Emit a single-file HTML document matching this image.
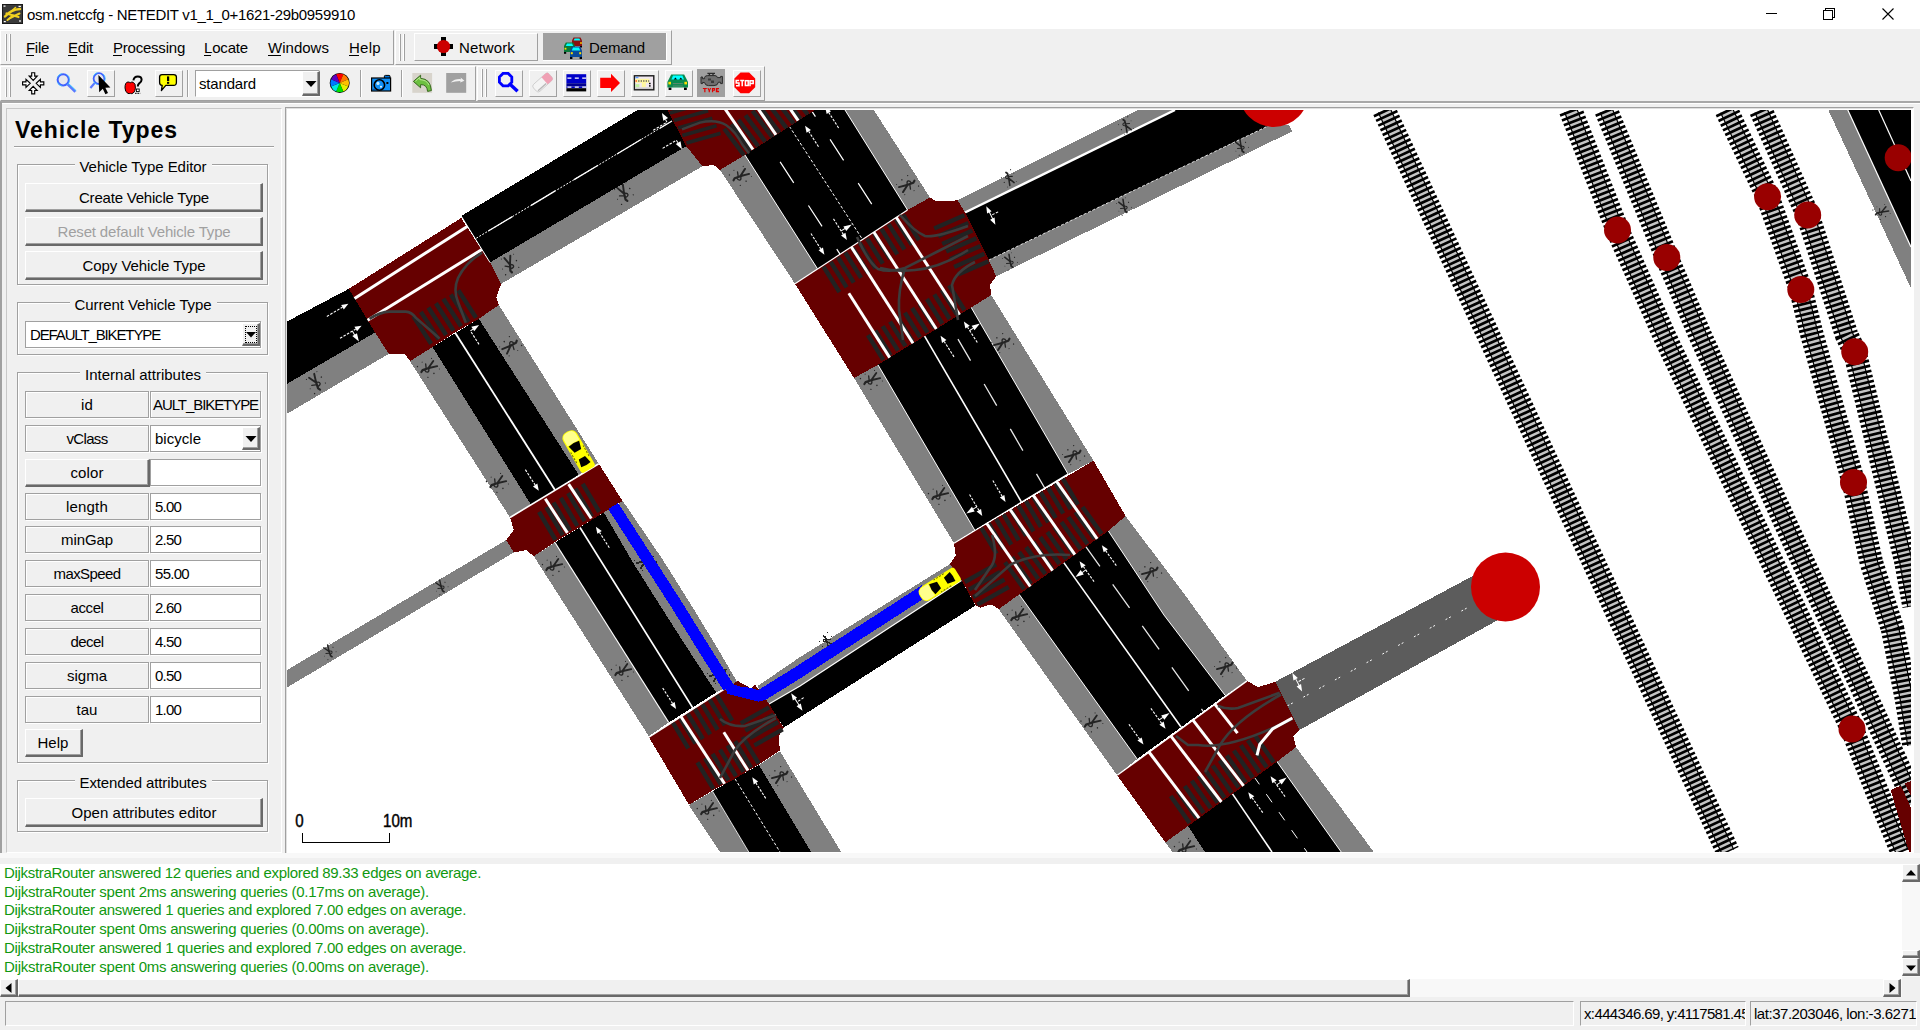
<!DOCTYPE html><html><head><meta charset="utf-8"><title>NETEDIT</title><style>
*{box-sizing:border-box;margin:0;padding:0}
html,body{width:1920px;height:1030px;overflow:hidden;background:#f0f0f0;font-family:"Liberation Sans",sans-serif;}
.a{position:absolute}
.t{position:absolute;white-space:pre;color:#000}
u{text-decoration:none;border-bottom:1px solid #000;}
.btn{position:absolute;background:#f0f0f0;border-top:1px solid #fff;border-left:1px solid #fff;border-right:2px solid #696969;border-bottom:2px solid #696969;box-shadow:inset -1px -1px 0 #a0a0a0}
.btn2{position:absolute;background:#f0f0f0;border-top:1px solid #fff;border-left:1px solid #fff;border-right:1px solid #a0a0a0;border-bottom:1px solid #a0a0a0;}
.lab{position:absolute;background:#f0f0f0;border:1px solid #a0a0a0;box-shadow:inset 1px 1px 0 #fff, 1px 1px 0 #fff}
.fld{position:absolute;background:#fff;border:1px solid #a0a0a0;box-shadow:1px 1px 0 #fff}
.grp{position:absolute;border:1px solid #a0a0a0;box-shadow:inset 1px 1px 0 #fff, 1px 1px 0 #fff}
.gl{position:absolute;background:#f0f0f0;height:16px}
.grip{position:absolute;width:2px;border-left:1px solid #fff;border-right:1px solid #a0a0a0}
.sep{position:absolute;width:2px;border-left:1px solid #a0a0a0;border-right:1px solid #fff}
.panel{position:absolute;border-right:1px solid #a0a0a0;border-bottom:1px solid #a0a0a0;border-top:1px solid #fff;border-left:1px solid #fff}
.sunk{position:absolute;border-top:1px solid #a0a0a0;border-left:1px solid #a0a0a0;border-bottom:1px solid #fff;border-right:1px solid #fff}
</style></head><body>
<div class="a" style="left:0;top:0;width:1920px;height:29px;background:#fff"></div>
<svg class="a" style="left:2px;top:4px" width="21" height="20" viewBox="0 0 21 20"><rect width="21" height="20" fill="#3a3a3a"/><rect x=".5" y=".5" width="20" height="19" fill="none" stroke="#1a1a1a"/>
<g fill="none" stroke="#f0d020" stroke-linecap="round"><path d="M3 12.5Q9 5.5 18 5" stroke-width="2.4"/><path d="M4.5 9.5L16.5 13" stroke-width="2.2"/><path d="M7.5 14.5Q12 12 17.5 9.5" stroke-width="2"/><path d="M5.5 16L11 11.5" stroke-width="2"/><path d="M9 7.5L13.5 3.5" stroke-width="1.6"/></g>
<g fill="#fff"><rect x="1.5" y="1.5" width="2" height="1.2"/><rect x="16.5" y="1.8" width="2.4" height="1.2"/><rect x="1.8" y="17" width="2" height="1.2"/><rect x="17" y="16.4" width="2" height="1.2"/></g></svg>

<span class="t " style="left:27.00px;top:6.20px;font-size:15px;line-height:17.25px;letter-spacing:-0.319px;">osm.netccfg - NETEDIT v1_1_0+1621-29b0959910</span>
<svg class="a" style="left:1750px;top:0" width="170" height="29" viewBox="0 0 170 29"><g stroke="#000" stroke-width="1" fill="none" shape-rendering="crispEdges"><path d="M15.5 13.5h11"/><path d="M73.5 10.5h9v9h-9z"/><path d="M75.5 10.5v-2h9v9h-2"/></g><path d="M132.5 8.5l11 11M143.5 8.5l-11 11" stroke="#000" stroke-width="1.1" fill="none"/></svg>
<div class="panel" style="left:0;top:30px;width:394px;height:35px"></div>
<div class="panel" style="left:395px;top:30px;width:277px;height:35px"></div>
<div class="grip" style="left:5px;top:34px;height:27px"></div><div class="grip" style="left:9px;top:34px;height:27px"></div>
<div class="grip" style="left:399px;top:34px;height:27px"></div><div class="grip" style="left:403px;top:34px;height:27px"></div>
<span class="t " style="left:26.00px;top:39.20px;font-size:15px;line-height:17.25px;letter-spacing:-0.292px;">File</span>
<div class="a" style="left:26px;top:55px;width:8.2px;height:1px;background:#000"></div>
<span class="t " style="left:68.00px;top:39.20px;font-size:15px;line-height:17.25px;letter-spacing:-0.212px;">Edit</span>
<div class="a" style="left:68px;top:55px;width:9.0px;height:1px;background:#000"></div>
<span class="t " style="left:113.00px;top:39.20px;font-size:15px;line-height:17.25px;letter-spacing:-0.220px;">Processing</span>
<div class="a" style="left:113px;top:55px;width:9.0px;height:1px;background:#000"></div>
<span class="t " style="left:204.00px;top:39.20px;font-size:15px;line-height:17.25px;letter-spacing:-0.173px;">Locate</span>
<div class="a" style="left:204px;top:55px;width:7.3px;height:1px;background:#000"></div>
<span class="t " style="left:268.00px;top:39.20px;font-size:15px;line-height:17.25px;letter-spacing:0.021px;">Windows</span>
<div class="a" style="left:268px;top:55px;width:13.2px;height:1px;background:#000"></div>
<span class="t " style="left:349.00px;top:39.20px;font-size:15px;line-height:17.25px;letter-spacing:0.288px;">Help</span>
<div class="a" style="left:349px;top:55px;width:9.8px;height:1px;background:#000"></div>
<div class="btn2" style="left:414px;top:33px;width:124px;height:28px"></div>
<div class="a" style="left:543px;top:33px;width:124px;height:28px;background:#a0a0a0;border-right:1px solid #fff;border-bottom:1px solid #fff"></div>
<span class="t " style="left:459.00px;top:39.20px;font-size:15px;line-height:17.25px;letter-spacing:0.141px;">Network</span>
<span class="t " style="left:589.00px;top:39.20px;font-size:15px;line-height:17.25px;letter-spacing:-0.116px;">Demand</span>
<div class="panel" style="left:0;top:66px;width:476px;height:35px"></div>
<div class="panel" style="left:477px;top:66px;width:288px;height:35px"></div>
<div class="grip" style="left:5px;top:69px;height:28px"></div><div class="grip" style="left:9px;top:69px;height:28px"></div>
<div class="grip" style="left:481px;top:69px;height:28px"></div><div class="grip" style="left:485px;top:69px;height:28px"></div>
<div class="btn2" style="left:87px;top:70px;width:28px;height:27px"></div>
<div class="btn2" style="left:155px;top:70px;width:28px;height:27px"></div>
<div class="btn2" style="left:495px;top:70px;width:28px;height:27px"></div>
<div class="btn2" style="left:529px;top:70px;width:28px;height:27px"></div>
<div class="btn2" style="left:563px;top:70px;width:28px;height:27px"></div>
<div class="btn2" style="left:597px;top:70px;width:28px;height:27px"></div>
<div class="btn2" style="left:631px;top:70px;width:28px;height:27px"></div>
<div class="btn2" style="left:665px;top:70px;width:28px;height:27px"></div>
<div class="btn2" style="left:733px;top:70px;width:28px;height:27px"></div>
<div class="a" style="left:697px;top:69px;width:28px;height:28px;background:#a0a0a0"></div>
<div class="sep" style="left:187px;top:70px;height:27px"></div>
<div class="sep" style="left:360px;top:70px;height:27px"></div>
<div class="sep" style="left:401px;top:70px;height:27px"></div>
<div class="a" style="left:195px;top:70px;width:125px;height:27px;background:#fff;border-top:1px solid #a0a0a0;border-left:1px solid #a0a0a0;border-bottom:1px solid #fff;border-right:1px solid #fff"></div>
<div class="btn" style="left:302px;top:71px;width:18px;height:25px"></div>
<svg class="a" style="left:305px;top:80px" width="12" height="8"><path d="M0.5 1h11L6 7z" fill="#000"/></svg>
<span class="t " style="left:199.00px;top:75.20px;font-size:15px;line-height:17.25px;letter-spacing:-0.172px;">standard</span>
<svg class="a" style="left:0;top:0" width="800" height="101" viewBox="0 0 800 101">
<!-- network icon -->
<g transform="translate(443.5 46.5)"><rect x="-2.5" y="-9.5" width="5" height="19" fill="#000"/><rect x="-9.5" y="-2.5" width="19" height="5" fill="#000"/><circle r="6.6" fill="#cc0000"/></g>
<!-- demand icon: three cars -->
<g transform="translate(563 37)">
 <g transform="translate(7 0)"><path d="M2 3.5L3.5 0.5H10.5L12 3.5V9H2Z" fill="#8b1010"/><path d="M3.6 3.6L4.6 1.4H9.4L10.4 3.6Z" fill="#00ffff"/><rect x="2" y="9" width="2" height="1.5" fill="#000"/><rect x="10" y="9" width="2" height="1.5" fill="#000"/><rect x="10.2" y="5.2" width="1.6" height="1.6" fill="#ffe000"/></g>
 <g transform="translate(0 5)"><path d="M1 4L2.8 0.5H10.2L12 4V10H1Z" fill="#0a7a3a"/><path d="M2.8 4L4 1.5H9L10.2 4Z" fill="#00ffff"/><rect x="1" y="10" width="2.2" height="1.8" fill="#000"/><rect x="1.6" y="5.8" width="1.8" height="1.8" fill="#ffe000"/></g>
 <g transform="translate(6 9)"><path d="M1 4.5L2.8 0.5H11.2L13 4.5V11H1Z" fill="#0a4a9a"/><path d="M2.8 4.4L4 1.5H10L11.2 4.4Z" fill="#00ffff"/><rect x="1" y="11" width="2.4" height="2" fill="#000"/><rect x="10.6" y="11" width="2.4" height="2" fill="#000"/><rect x="1.8" y="6.2" width="2" height="2" fill="#ffe000"/><rect x="10.2" y="6.2" width="2" height="2" fill="#ffe000"/></g>
</g>
<!-- recenter -->
<g transform="translate(33.2 83.3)" fill="#fff" stroke="#000" stroke-width="1.15" stroke-linejoin="miter">
 <path d="M-1.5 -10.6H1.5V-7.2H4L0 -3L-4 -7.2H-1.5Z" transform="rotate(0)"/><path d="M-1.5 -10.6H1.5V-7.2H4L0 -3L-4 -7.2H-1.5Z" transform="rotate(90)"/><path d="M-1.5 -10.6H1.5V-7.2H4L0 -3L-4 -7.2H-1.5Z" transform="rotate(180)"/><path d="M-1.5 -10.6H1.5V-7.2H4L0 -3L-4 -7.2H-1.5Z" transform="rotate(270)"/>
</g>
<!-- magnifier -->
<g transform="translate(63.2 79.8)"><path d="M4 4L12.2 12" stroke="#5a78ff" stroke-width="2.6"/><path d="M5.2 3.6L13 11" stroke="#40c8ff" stroke-width="1"/><circle r="5.6" fill="#e8e8ee" stroke="#4060ff" stroke-width="2"/><circle r="6.4" fill="none" stroke="#40c8ff" stroke-width=".8" stroke-dasharray="6 5"/></g>
<!-- magnifier + cursor -->
<g transform="translate(99 78.6)"><path d="M-4 4L-8.6 9.4" stroke="#5a78ff" stroke-width="2.2"/><circle r="5.4" fill="#e8e8ee" stroke="#4060ff" stroke-width="1.8"/><circle r="6.2" fill="none" stroke="#40c8ff" stroke-width=".8" stroke-dasharray="5 6"/><path d="M-0.6 -3.6L0.2 13.6L3.8 10.2L6.4 15.6L9 14.4L6.4 9.2L11.4 8.8Z" fill="#000"/></g>
<!-- apple + ? -->
<g transform="translate(130.4 87.6)"><path d="M-5.4 0.2Q-5.4 -5.4 -2.4 -5.6Q-1 -5.6 -0.2 -4.8Q0.8 -5.8 2.6 -5.4Q5.4 -4.4 5 0.6Q4.4 5.4 1.4 6Q0.4 6.2 -0.2 5.6Q-1.2 6.4 -2.4 5.8Q-5.4 4.4 -5.4 0.2Z" fill="#ff0000" stroke="#000" stroke-width="1"/></g>
<g transform="translate(137.6 84)"><path d="M-4.2 -3.6Q-3.6 -7.6 0.2 -7.6Q4 -7.6 4 -4.2Q4 -2.2 1.6 -0.6Q0.2 0.4 0.2 2.6" fill="none" stroke="#000" stroke-width="2"/><rect x="-1.2" y="5" width="2.8" height="2.6" fill="#fff" stroke="#000" stroke-width=".9"/><path d="M-2.4 9.4H2.6" stroke="#000" stroke-width="1.1" stroke-dasharray="1.3 1"/></g>
<!-- speech bubble -->
<g transform="translate(168 83)"><path d="M-8.4 -6Q-8.4 -8.4 -6 -8.4H5.6Q8.4 -8.4 8.4 -6V-0.4Q8.4 2.4 5.6 2.4H-2.2L-6.6 7.6L-5.8 2.4H-6Q-8.4 2.4 -8.4 -0.4Z" fill="#ffff00" stroke="#000" stroke-width="1.3" stroke-linejoin="round"/><rect x="-1" y="-6.6" width="2.2" height="4.8" fill="#000"/><rect x="-1" y="-1" width="2.2" height="1.8" fill="#000"/></g>
<!-- color wheel -->
<g transform="translate(339.7 82.9)"><circle r="10" fill="#000"/>
<path d="M0 0L-3.6 -8.6A9.3 9.3 0 0 1 3.6 -8.6Z" fill="#ff0000"/>
<path d="M0 0L3.6 -8.6A9.3 9.3 0 0 1 8.6 -3.6Z" fill="#ff7800"/>
<path d="M0 0L8.6 -3.6A9.3 9.3 0 0 1 8.6 3.6Z" fill="#ffc000"/>
<path d="M0 0L8.6 3.6A9.3 9.3 0 0 1 3.6 8.6Z" fill="#e8f000"/>
<path d="M0 0L3.6 8.6A9.3 9.3 0 0 1 -3.6 8.6Z" fill="#00e000"/>
<path d="M0 0L-3.6 8.6A9.3 9.3 0 0 1 -8.6 3.6Z" fill="#00e8e0"/>
<path d="M0 0L-8.6 3.6A9.3 9.3 0 0 1 -8.6 -3.6Z" fill="#0078ff"/>
<path d="M0 0L-8.6 -3.6A9.3 9.3 0 0 1 -3.6 -8.6Z" fill="#6000c0"/>
</g>
<!-- camera -->
<g transform="translate(371 75)"><path d="M13.4 3V1.2Q13.4 0.4 14.4 0.4H18Q19 0.4 19 1.2V3" fill="#0078e0" stroke="#000" stroke-width="1"/><rect x="0.6" y="3" width="19" height="13" fill="#1090f8" stroke="#000" stroke-width="1.2"/><circle cx="8.4" cy="10" r="5.2" fill="#1090f8" stroke="#000" stroke-width="1.6"/><circle cx="7" cy="8.4" r="1.6" fill="#c0e8ff"/><circle cx="10" cy="11.8" r="1" fill="#e0f4ff"/><rect x="15.4" y="7" width="2" height="2" fill="#000"/><path d="M1.2 14.4H4" stroke="#0050a0" stroke-width="1"/></g>
<!-- undo -->
<rect x="412.3" y="73" width="19.8" height="19.8" fill="#d8d4cc"/>
<path d="M413.4 81.4L420.6 75.2V78.4Q430.6 78.8 431.4 90.6L427.6 91.4Q427 84.4 420.6 84.6V87.8Z" fill="#6cc040" stroke="#386820" stroke-width="1" stroke-linejoin="round"/>
<path d="M415.4 81.2L419.8 77.4V79.6Q427 80 429 85" fill="none" stroke="#b8e890" stroke-width="1"/>
<!-- redo -->
<rect x="446.2" y="73" width="20" height="19.8" fill="#a0a0a0"/>
<path d="M450.6 82.6Q455 78.6 461 79.2L460.6 77.6L464.4 80.8L460.2 82.4L460.4 81Q455.4 81 450.6 82.6Z" fill="#f0f0f0"/>
<!-- inspect -->
<g transform="translate(505.6 79.6)"><path d="M3.6 3.8L12 11.6" stroke="#0000ff" stroke-width="3.4"/><path d="M-2.6 -6.2H2.6L6.2 -2.6V2.6L2.6 6.2H-2.6L-6.2 2.6V-2.6Z" fill="#f0f0f0" stroke="#0000ff" stroke-width="2.8"/></g>
<!-- eraser -->
<g transform="translate(542.6 82.4) rotate(-42)"><rect x="-10.5" y="-4.6" width="21" height="9.4" rx="2.6" fill="#f4f4f4" stroke="#c8c8c8" stroke-width=".8"/><path d="M2.6 -4.6H7.9Q10.5 -4.6 10.5 -2V2.2Q10.5 4.8 7.9 4.8H2.6Z" fill="#f0a0b4"/><path d="M-9 3.2H2" stroke="#b8b8b8" stroke-width="1.4"/></g>
<!-- road (select) -->
<g transform="translate(566.4 74.2)"><rect width="19.8" height="9" fill="#0000c8"/><rect y="9" width="19.8" height="3.4" fill="#000090"/><rect y="12.4" width="19.8" height="1.6" fill="#0000c8"/><rect y="14" width="19.8" height="3.2" fill="#000"/><path d="M1 4H19.8M1 12.9H19.8" stroke="#fff" stroke-width="1.3" stroke-dasharray="4 3.4"/></g>
<!-- move arrow -->
<path d="M600.2 77.8H611V73.8L620 82.9L611 92V88H600.2Z" fill="#ff0000"/>
<!-- calendar / route -->
<g transform="translate(633.8 75.2)"><rect x=".6" y=".6" width="19.4" height="14" fill="#f0e8f0" stroke="#1a1a1a" stroke-width="1.4"/><rect x="1.6" y="1.6" width="3" height="1.4" fill="#60a0ff"/><rect x="1.6" y="3.6" width="14" height="4" fill="#fff8a0"/><rect x="8" y="7" width="4" height="5" fill="#fff8a0"/><rect x="1.6" y="9" width="4" height="3" fill="#c0f0a0"/><rect x="1.6" y="5" width="1.6" height="1.6" fill="#ff6030"/><path d="M4.4 5.8H15.4" stroke="#555" stroke-width="1.6" stroke-dasharray="1.2 1.3"/><rect x="15.2" y="7.6" width="1.6" height="1.4" fill="#000"/><rect x="15.2" y="10" width="1.6" height="1.4" fill="#000"/><path d="M1.6 13H19" stroke="#c8c8c8" stroke-width="1.4"/></g>
<!-- green car -->
<g transform="translate(666.8 74)"><path d="M0.6 8L4.4 0.6H17.4L21.2 8V13.6H0.6Z" fill="#0a8a50"/><path d="M4.6 5.6L6.2 1.6H15.6L17.2 5.6Z" fill="#00ffff"/><path d="M7 5.6L8.6 3.4L10.2 5.6ZM12.4 5.6L14 3.4L15.6 5.6Z" fill="#000"/><rect x="1.6" y="7.8" width="2.6" height="2.6" fill="#ffe000"/><rect x="17.6" y="7.8" width="2.6" height="2.6" fill="#ffe000"/><path d="M6 9.6H16M6 12H16" stroke="#608870" stroke-width="1"/><rect x="1.8" y="13.6" width="2.8" height="2.4" fill="#000"/><rect x="17.2" y="13.6" width="2.8" height="2.4" fill="#000"/></g>
<!-- engine TYPE -->
<g transform="translate(700 72)"><path d="M7.4 1.4H15M9.4 1.4V3.6M13 1.4V3.6" stroke="#2a2a2a" stroke-width="1.4" fill="none"/><path d="M4.6 5.4Q5 3.6 7.6 3.6H15Q17 3.6 17.4 5.6H20.6V4.4H22.4V11.6H20.6V10.2H18.4Q17.8 13.6 14 13.6H8.4Q5.2 13.6 4.6 10.6L2.6 10.4V11.6H1V5H2.6V6.8L4.6 6.6Z" fill="#6e6e6e" stroke="#2a2a2a" stroke-width="1"/><path d="M8 6.4H11V8.6H14V11H11V8.6H8Z" fill="#3a3a3a"/><g fill="#e00000" transform="translate(-0.46 -0.3) scale(.885 1)"><path d="M3.8 16.2H8.2V17.4H6.7V20.6H5.3V17.4H3.8Z"/><path d="M8.8 16.2H10.2L11 18L11.8 16.2H13.2L11.7 19V20.6H10.3V19Z"/><path d="M14 16.2H17.4V19H15.4V20.6H14ZM15.4 17.2V18H16.2V17.2Z"/><path d="M18.4 16.2H22V17.4H19.8V17.9H21.4V18.9H19.8V19.4H22V20.6H18.4Z"/></g></g>
<!-- stop -->
<g transform="translate(744.8 82.9)"><path d="M-4.3 -10.4H4.3L10.4 -4.3V4.3L4.3 10.4H-4.3L-10.4 4.3V-4.3Z" fill="#ff0000"/><g fill="none" stroke="#fff" stroke-width="1.5"><path d="M-5.6 -2.4H-8.6V0H-5.8V2.8H-8.8"/><path d="M-4.6 -2.4H-0.6M-2.6 -2.4V3.4"/><rect x="0.6" y="-2.2" width="2.8" height="4.8"/><path d="M5.2 3.4V-2.2H8.4V0.6H5.2"/></g></g>
</svg>

<div class="a" style="left:0;top:101px;width:1920px;height:2px;background:#a8a8a8"></div>
<div class="a" style="left:0;top:103px;width:1920px;height:1px;background:#fff"></div>
<div class="a" style="left:0;top:102px;width:2px;height:752px;background:#a0a0a0"></div>
<div class="sunk" style="left:6px;top:108px;width:276px;height:745px;border-color:#c8c8c8 #fff #fff #c8c8c8"></div>
<span class="t " style="left:15.00px;top:117.34px;font-size:23px;line-height:26.45px;letter-spacing:0.967px;font-weight:700;">Vehicle Types</span>
<div class="a" style="left:14px;top:146px;width:260px;height:1px;background:#a0a0a0"></div><div class="a" style="left:14px;top:147px;width:260px;height:1px;background:#fff"></div>
<div class="grp" style="left:17px;top:164px;width:251px;height:121px"></div>
<div class="gl" style="left:74.5px;top:157px;width:137.0px"></div>
<span class="t " style="left:79.50px;top:157.80px;font-size:15px;line-height:17.25px;letter-spacing:-0.060px;">Vehicle Type Editor</span>
<div class="btn" style="left:25px;top:183px;width:238px;height:29px"></div>
<span class="t " style="left:79.00px;top:189.20px;font-size:15px;line-height:17.25px;letter-spacing:-0.209px;">Create Vehicle Type</span>
<div class="btn" style="left:25px;top:217px;width:238px;height:29px"></div>
<span class="t " style="left:57.50px;top:223.20px;font-size:15px;line-height:17.25px;letter-spacing:-0.167px;color:#a0a0a0;">Reset default Vehicle Type</span>
<div class="btn" style="left:25px;top:251px;width:238px;height:29px"></div>
<span class="t " style="left:82.50px;top:257.20px;font-size:15px;line-height:17.25px;letter-spacing:-0.057px;">Copy Vehicle Type</span>
<div class="grp" style="left:17px;top:302px;width:251px;height:53px"></div>
<div class="gl" style="left:69.5px;top:295px;width:147.0px"></div>
<span class="t " style="left:74.50px;top:295.80px;font-size:15px;line-height:17.25px;letter-spacing:-0.098px;">Current Vehicle Type</span>
<div class="fld" style="left:25px;top:321px;width:236px;height:27px"></div>
<div class="btn" style="left:242px;top:323px;width:18px;height:23px"></div>
<div class="a" style="left:245px;top:326px;width:12px;height:17px;border:1px dotted #000"></div>
<svg class="a" style="left:246px;top:331px" width="10" height="7"><path d="M0 1h10L5 6.5z" fill="#000"/></svg>
<span class="t " style="left:30.00px;top:326.20px;font-size:15px;line-height:17.25px;letter-spacing:-1.131px;">DEFAULT_BIKETYPE</span>
<div class="grp" style="left:17px;top:372px;width:251px;height:391px"></div>
<div class="gl" style="left:80.0px;top:365px;width:126.0px"></div>
<span class="t " style="left:85.00px;top:365.80px;font-size:15px;line-height:17.25px;letter-spacing:0.005px;">Internal attributes</span>
<div class="lab" style="left:25px;top:391px;width:124px;height:27px"></div>
<span class="t " style="left:81.00px;top:396.20px;font-size:15px;line-height:17.25px;letter-spacing:0.163px;">id</span>
<div class="lab" style="left:150px;top:391px;width:111px;height:27px"></div>
<span class="t " style="left:153.00px;top:396.20px;font-size:15px;line-height:17.25px;letter-spacing:-1.072px;">AULT_BIKETYPE</span>
<div class="lab" style="left:25px;top:425px;width:124px;height:27px"></div>
<span class="t " style="left:66.50px;top:430.20px;font-size:15px;line-height:17.25px;letter-spacing:-0.668px;">vClass</span>
<div class="fld" style="left:150px;top:425px;width:111px;height:27px"></div>
<span class="t " style="left:155.00px;top:430.20px;font-size:15px;line-height:17.25px;letter-spacing:0.021px;">bicycle</span>
<div class="btn" style="left:242px;top:427px;width:18px;height:23px"></div>
<svg class="a" style="left:245px;top:435px" width="12" height="8"><path d="M0.5 1h11L6 7z" fill="#000"/></svg>
<div class="btn" style="left:25px;top:459px;width:125px;height:28px"></div>
<span class="t " style="left:70.50px;top:464.20px;font-size:15px;line-height:17.25px;letter-spacing:0.098px;">color</span>
<div class="fld" style="left:150px;top:459px;width:111px;height:27px"></div>
<div class="lab" style="left:25px;top:493px;width:124px;height:27px"></div>
<span class="t " style="left:66.00px;top:498.20px;font-size:15px;line-height:17.25px;letter-spacing:0.188px;">length</span>
<div class="fld" style="left:150px;top:493px;width:111px;height:27px"></div>
<span class="t " style="left:155.00px;top:498.20px;font-size:15px;line-height:17.25px;letter-spacing:-0.799px;">5.00</span>
<div class="lab" style="left:25px;top:526px;width:124px;height:27px"></div>
<span class="t " style="left:61.00px;top:531.20px;font-size:15px;line-height:17.25px;letter-spacing:-0.087px;">minGap</span>
<div class="fld" style="left:150px;top:526px;width:111px;height:27px"></div>
<span class="t " style="left:155.00px;top:531.20px;font-size:15px;line-height:17.25px;letter-spacing:-0.799px;">2.50</span>
<div class="lab" style="left:25px;top:560px;width:124px;height:27px"></div>
<span class="t " style="left:53.50px;top:565.20px;font-size:15px;line-height:17.25px;letter-spacing:-0.589px;">maxSpeed</span>
<div class="fld" style="left:150px;top:560px;width:111px;height:27px"></div>
<span class="t " style="left:155.00px;top:565.20px;font-size:15px;line-height:17.25px;letter-spacing:-0.707px;">55.00</span>
<div class="lab" style="left:25px;top:594px;width:124px;height:27px"></div>
<span class="t " style="left:70.50px;top:599.20px;font-size:15px;line-height:17.25px;letter-spacing:-0.403px;">accel</span>
<div class="fld" style="left:150px;top:594px;width:111px;height:27px"></div>
<span class="t " style="left:155.00px;top:599.20px;font-size:15px;line-height:17.25px;letter-spacing:-0.799px;">2.60</span>
<div class="lab" style="left:25px;top:628px;width:124px;height:27px"></div>
<span class="t " style="left:70.50px;top:633.20px;font-size:15px;line-height:17.25px;letter-spacing:-0.572px;">decel</span>
<div class="fld" style="left:150px;top:628px;width:111px;height:27px"></div>
<span class="t " style="left:155.00px;top:633.20px;font-size:15px;line-height:17.25px;letter-spacing:-0.799px;">4.50</span>
<div class="lab" style="left:25px;top:662px;width:124px;height:27px"></div>
<span class="t " style="left:67.00px;top:667.20px;font-size:15px;line-height:17.25px;letter-spacing:-0.002px;">sigma</span>
<div class="fld" style="left:150px;top:662px;width:111px;height:27px"></div>
<span class="t " style="left:155.00px;top:667.20px;font-size:15px;line-height:17.25px;letter-spacing:-0.799px;">0.50</span>
<div class="lab" style="left:25px;top:696px;width:124px;height:27px"></div>
<span class="t " style="left:76.50px;top:701.20px;font-size:15px;line-height:17.25px;letter-spacing:0.049px;">tau</span>
<div class="fld" style="left:150px;top:696px;width:111px;height:27px"></div>
<span class="t " style="left:155.00px;top:701.20px;font-size:15px;line-height:17.25px;letter-spacing:-0.799px;">1.00</span>
<div class="btn" style="left:25px;top:729px;width:58px;height:28px"></div>
<span class="t " style="left:37.50px;top:734.20px;font-size:15px;line-height:17.25px;letter-spacing:0.038px;">Help</span>
<div class="grp" style="left:17px;top:780px;width:251px;height:52px"></div>
<div class="gl" style="left:74.5px;top:773px;width:137.0px"></div>
<span class="t " style="left:79.50px;top:773.80px;font-size:15px;line-height:17.25px;letter-spacing:-0.118px;">Extended attributes</span>
<div class="btn" style="left:25px;top:798px;width:238px;height:29px"></div>
<span class="t " style="left:71.50px;top:804.20px;font-size:15px;line-height:17.25px;letter-spacing:0.034px;">Open attributes editor</span>
<div class="a" style="left:285px;top:107px;width:1629px;height:747px;border-top:1px solid #a0a0a0;border-left:1px solid #a0a0a0;border-right:1px solid #fff;border-bottom:1px solid #fff"></div><div class="a" style="left:286px;top:108px;width:1627px;height:745px;border-top:1px solid #e0e0e0;border-left:1px solid #e0e0e0;background:#fff"></div><svg class="a" style="left:287px;top:110px" width="1624" height="742" viewBox="287 110 1624 742">
<g shape-rendering="crispEdges">
<polygon points="287.0,670.0 506.2,540.0 513.8,552.5 287.0,687.5" fill="#808080" />
<polygon points="287.0,321.5 348.8,288.8 375.0,332.5 287.0,383.8" fill="#000" />
<polygon points="287.0,383.8 375.0,332.5 388.8,353.8 287.0,413.8" fill="#808080" />
<polygon points="461.2,216.0 637.5,110.0 667.5,110.0 686.2,146.2 490.0,262.5" fill="#000" />
<polygon points="490.0,262.5 686.2,146.2 702.5,166.2 501.2,283.8" fill="#808080" />
<polygon points="410.0,361.2 432.5,347.0 531.2,505.0 510.0,517.5" fill="#808080" />
<polygon points="432.5,347.0 478.8,318.8 578.8,475.0 531.2,505.0" fill="#000" />
<polygon points="478.8,318.8 498.8,305.0 598.8,463.8 578.8,475.0" fill="#808080" />
<polygon points="533.8,556.2 555.0,542.5 668.8,722.5 648.8,736.2" fill="#808080" />
<polygon points="555.0,542.5 603.8,512.5 632.8,562.2 658.9,603.7 682.9,641.3 716.2,692.5 668.8,722.5" fill="#000" />
<polygon points="603.8,512.5 622.8,501.0 662.3,559.0 690.4,603.7 717.0,647.4 737.5,682.5 716.2,692.5 682.9,641.3 658.9,603.7 632.8,562.2" fill="#808080" />
<polygon points="688.8,805.0 712.5,791.2 748.8,852.0 720.0,852.0" fill="#808080" />
<polygon points="712.5,791.2 758.8,765.0 811.2,852.0 748.8,852.0" fill="#000" />
<polygon points="758.8,765.0 780.0,751.2 841.2,852.0 811.2,852.0" fill="#808080" />
<polygon points="757.5,686.2 800.0,657.1 950.0,564.0 961.5,580.4 800.0,685.9 769.0,704.0" fill="#808080" />
<polygon points="769.0,704.0 800.0,685.9 961.5,580.4 975.5,605.5 783.8,727.5" fill="#000" />
<polygon points="720.0,170.0 745.0,155.0 817.5,268.8 795.0,283.8" fill="#808080" />
<polygon points="745.0,155.0 790.0,126.2 815.0,110.0 845.0,110.0 907.5,210.0 817.5,268.8" fill="#000" />
<polygon points="845.0,110.0 873.8,110.0 930.0,197.5 907.5,210.0" fill="#808080" />
<polygon points="854.0,378.0 878.0,364.8 974.7,530.0 954.0,543.2" fill="#808080" />
<polygon points="878.0,364.8 971.2,307.5 1068.0,474.0 974.7,530.0" fill="#000" />
<polygon points="971.2,307.5 991.2,295.0 1093.5,460.7 1068.0,474.0" fill="#808080" />
<polygon points="998.6,609.2 1019.2,594.4 1137.2,759.0 1117.2,775.3" fill="#808080" />
<polygon points="1019.2,594.4 1108.3,530.9 1164.0,615.1 1225.2,695.4 1137.2,759.0" fill="#000" />
<polygon points="1108.3,530.9 1125.6,516.0 1187.1,597.9 1247.0,680.9 1225.2,695.4 1164.0,615.1" fill="#808080" />
<polygon points="1165.3,842.4 1188.0,826.1 1205.0,852.0 1172.5,852.0" fill="#808080" />
<polygon points="1188.0,826.1 1277.0,761.7 1341.2,852.0 1205.0,852.0" fill="#000" />
<polygon points="1277.0,761.7 1296.0,747.1 1373.8,852.0 1341.2,852.0" fill="#808080" />
<polygon points="957.5,200.0 1137.5,110.0 1175.0,110.0 965.0,212.5" fill="#808080" />
<polygon points="965.0,212.5 1175.0,110.0 1290.0,110.0 1290.0,116.0 988.8,260.0" fill="#000" />
<polygon points="988.8,260.0 1270.0,125.0 1288.8,125.0 1292.5,131.2 996.2,276.2" fill="#808080" />
<polygon points="1275.2,681.8 1493.0,565.1 1518.0,608.9 1299.7,729.9" fill="#5c5c5c" />
<polygon points="1828.3,110.0 1847.8,110.0 1911.0,247.0 1911.0,288.3" fill="#808080" />
<polygon points="1847.8,110.0 1911.0,110.0 1911.0,247.0" fill="#000" />
</g>
<polyline points="476.3,238.2 672.0,121.0" fill="none" stroke="#fff" stroke-width="1" stroke-dasharray="2 1.5"/>
<polyline points="476.3,238.2 672.0,121.0" fill="none" stroke="#fff" stroke-width="1.3" stroke-dasharray="28 22" stroke-dashoffset="-14"/>
<polyline points="455.0,332.5 555.0,490.0" fill="none" stroke="#fff" stroke-width="1.8" />
<polyline points="580.0,527.5 692.5,707.5" fill="none" stroke="#fff" stroke-width="1.6" />
<polyline points="555.0,542.5 668.8,722.5" fill="none" stroke="#fff" stroke-width="1.2" />
<polyline points="735.0,778.8 780.0,852.0" fill="none" stroke="#fff" stroke-width="1" stroke-dasharray="3 2"/>
<polyline points="712.5,791.2 748.8,852.0" fill="none" stroke="#fff" stroke-width="0.8" />
<polyline points="789.3,126.2 862.5,239.4" fill="none" stroke="#fff" stroke-width="1" stroke-dasharray="3 2"/>
<polyline points="766.5,140.9 840.0,254.1" fill="none" stroke="#fff" stroke-width="1.2" stroke-dasharray="25 27" stroke-dashoffset="-25"/>
<polyline points="812.2,111.6 885.0,224.7" fill="none" stroke="#fff" stroke-width="1.2" stroke-dasharray="25 27" stroke-dashoffset="-33"/>
<polyline points="745.0,155.0 817.5,268.8" fill="none" stroke="#fff" stroke-width="1" />
<polyline points="845.0,110.0 907.5,210.0" fill="none" stroke="#fff" stroke-width="1" />
<polyline points="924.6,336.1 1021.4,502.0" fill="none" stroke="#fff" stroke-width="1.6" />
<polyline points="947.9,321.8 1044.7,488.0" fill="none" stroke="#fff" stroke-width="1.3" stroke-dasharray="25 27" stroke-dashoffset="-20" opacity=".9"/>
<polyline points="878.0,364.8 974.7,530.0" fill="none" stroke="#fff" stroke-width="1" />
<polyline points="971.2,307.5 1068.0,474.0" fill="none" stroke="#fff" stroke-width="1" />
<polyline points="1063.8,562.6 1181.2,727.2" fill="none" stroke="#fff" stroke-width="1.6" />
<polyline points="1086.0,546.8 1203.2,711.3" fill="none" stroke="#fff" stroke-width="1.3" stroke-dasharray="29 22" stroke-dashoffset="-46" opacity=".9"/>
<polyline points="1019.2,594.4 1137.2,759.0" fill="none" stroke="#fff" stroke-width="1" />
<polyline points="1108.3,530.9 1164.0,615.1 1225.2,695.4" fill="none" stroke="#fff" stroke-width="1" />
<polyline points="1232.5,793.9 1272.0,852.0" fill="none" stroke="#fff" stroke-width="1.6" />
<polyline points="1254.8,777.8 1307.0,852.0" fill="none" stroke="#fff" stroke-width="1" stroke-dasharray="10 12" stroke-dashoffset="-20"/>
<polyline points="1277.0,761.7 1341.2,852.0" fill="none" stroke="#fff" stroke-width="1" />
<polyline points="965.0,212.5 1175.0,110.0" fill="none" stroke="#fff" stroke-width="2.4" />
<polyline points="988.8,260.0 1270.0,125.0" fill="none" stroke="#fff" stroke-width="0.8" stroke-dasharray="3 2"/>
<polyline points="769.0,704.0 800.0,685.9 961.5,580.4" fill="none" stroke="#fff" stroke-width="1.2" />
<polyline points="1287.5,705.8 1505.5,587.0" fill="none" stroke="#fff" stroke-width="1" stroke-dasharray="2 2 2 12"/>
<polyline points="1847.8,110.0 1911.0,247.0" fill="none" stroke="#fff" stroke-width="1.2" />
<polyline points="1878.7,110.0 1911.0,181.0" fill="none" stroke="#fff" stroke-width="1.2" />
<g shape-rendering="crispEdges">
<polygon points="348.8,288.8 461.2,218.0 490.0,262.5 501.2,283.8 496.2,297.5 498.8,305.0 478.8,318.8 455.0,332.5 432.5,347.0 410.0,361.2 405.0,353.8 388.8,353.8 375.0,332.5" fill="#660000" />
<polygon points="667.5,110.0 686.2,146.2 702.5,166.2 713.8,165.0 720.0,170.0 745.0,155.0 790.0,126.2 815.0,110.0" fill="#660000" />
<polygon points="510.0,517.5 598.8,463.8 622.5,501.0 603.8,512.5 555.0,542.0 533.8,556.2 526.2,550.0 513.8,552.5 506.2,540.0 513.8,530.0" fill="#660000" />
<polygon points="648.9,737.1 726.8,687.6 737.8,681.0 750.9,688.3 755.2,684.7 758.2,689.0 764.0,696.3 769.0,704.0 783.6,727.6 778.5,736.4 780.0,750.2 759.6,764.0 735.0,778.8 713.0,790.2 689.0,804.8" fill="#660000" />
<polygon points="795.0,283.8 907.5,210.0 930.0,197.5 936.2,201.2 952.5,201.2 957.5,200.0 965.0,212.5 988.8,260.0 996.2,276.2 990.0,285.0 991.2,295.0 971.2,307.5 878.0,364.8 854.0,378.0" fill="#660000" />
<polygon points="954.0,543.2 1093.5,460.7 1125.6,516.0 1108.3,530.9 1019.2,594.4 998.6,609.2 991.2,604.3 980.4,607.6 975.5,605.1 961.5,580.4 949.9,563.9 955.7,555.6" fill="#660000" />
<polygon points="1117.2,775.3 1247.0,680.9 1257.9,687.2 1275.2,681.8 1299.7,729.9 1293.3,736.3 1296.0,747.1 1277.0,761.7 1188.0,826.1 1165.3,842.4" fill="#660000" />
</g>
<polyline points="510.0,517.5 598.8,463.8" fill="none" stroke="#fff" stroke-width="1.6" />
<polyline points="648.9,737.1 726.8,687.6" fill="none" stroke="#fff" stroke-width="1.4" />
<polyline points="795.0,283.8 907.5,210.0" fill="none" stroke="#fff" stroke-width="1.2" />
<polyline points="954.0,543.2 1068.0,474.0" fill="none" stroke="#fff" stroke-width="1.2" />
<polyline points="1117.2,775.3 1247.0,680.9" fill="none" stroke="#fff" stroke-width="1.4" />
<polyline points="461.2,216.0 490.0,262.5" fill="none" stroke="#fff" stroke-width="1" />
<line x1="413.4" y1="316.2" x2="431.1" y2="343.7" stroke="#222" stroke-width="4.4"/><line x1="420.9" y1="311.9" x2="438.6" y2="339.4" stroke="#222" stroke-width="4.4"/><line x1="428.4" y1="307.5" x2="446.1" y2="335.0" stroke="#222" stroke-width="4.4"/><line x1="435.9" y1="303.2" x2="453.5" y2="330.7" stroke="#222" stroke-width="4.4"/><line x1="443.3" y1="298.8" x2="461.0" y2="326.3" stroke="#222" stroke-width="4.4"/><line x1="450.8" y1="294.5" x2="468.5" y2="322.0" stroke="#222" stroke-width="4.4"/><line x1="458.3" y1="290.2" x2="476.0" y2="317.7" stroke="#222" stroke-width="4.4"/>
<clipPath id="cj2"><polygon points="667.5,110 686.25,146.25 702.5,166.25 713.75,165 720,170 745,155 790,126.25 815,110"/></clipPath><g clip-path="url(#cj2)">
<line x1="669.8" y1="113.0" x2="703.9" y2="103.3" stroke="#222" stroke-width="3.7"/><line x1="673.9" y1="120.5" x2="708.1" y2="110.8" stroke="#222" stroke-width="3.7"/><line x1="678.1" y1="128.0" x2="712.3" y2="118.3" stroke="#222" stroke-width="3.7"/><line x1="682.3" y1="135.5" x2="716.5" y2="125.8" stroke="#222" stroke-width="3.7"/><line x1="686.5" y1="143.0" x2="720.6" y2="133.3" stroke="#222" stroke-width="3.7"/>
<line x1="744.0" y1="155.2" x2="724.2" y2="128.8" stroke="#222" stroke-width="4.4"/><line x1="751.1" y1="150.7" x2="731.3" y2="124.3" stroke="#222" stroke-width="4.4"/><line x1="758.2" y1="146.2" x2="738.4" y2="119.8" stroke="#222" stroke-width="4.4"/><line x1="765.2" y1="141.6" x2="745.4" y2="115.2" stroke="#222" stroke-width="4.4"/><line x1="772.3" y1="137.1" x2="752.5" y2="110.7" stroke="#222" stroke-width="4.4"/><line x1="779.4" y1="132.6" x2="759.6" y2="106.2" stroke="#222" stroke-width="4.4"/><line x1="786.5" y1="128.1" x2="766.7" y2="101.7" stroke="#222" stroke-width="4.4"/><line x1="793.6" y1="123.5" x2="773.8" y2="97.1" stroke="#222" stroke-width="4.4"/><line x1="800.6" y1="119.0" x2="780.8" y2="92.6" stroke="#222" stroke-width="4.4"/><line x1="807.7" y1="114.5" x2="787.9" y2="88.1" stroke="#222" stroke-width="4.4"/>
</g>
<line x1="539.0" y1="511.8" x2="555.5" y2="539.8" stroke="#222" stroke-width="4.4"/><line x1="546.2" y1="507.1" x2="562.7" y2="535.1" stroke="#222" stroke-width="4.4"/><line x1="553.5" y1="502.5" x2="570.0" y2="530.5" stroke="#222" stroke-width="4.4"/><line x1="560.8" y1="497.8" x2="577.3" y2="525.8" stroke="#222" stroke-width="4.4"/><line x1="568.1" y1="493.1" x2="584.6" y2="521.1" stroke="#222" stroke-width="4.4"/><line x1="575.4" y1="488.5" x2="591.9" y2="516.5" stroke="#222" stroke-width="4.4"/><line x1="582.7" y1="483.8" x2="599.2" y2="511.8" stroke="#222" stroke-width="4.4"/>
<line x1="823.5" y1="266.7" x2="839.4" y2="292.1" stroke="#222" stroke-width="4.4"/><line x1="830.7" y1="261.9" x2="846.6" y2="287.4" stroke="#222" stroke-width="4.4"/><line x1="837.9" y1="257.2" x2="853.8" y2="282.6" stroke="#222" stroke-width="4.4"/><line x1="845.2" y1="252.5" x2="861.1" y2="277.9" stroke="#222" stroke-width="4.4"/><line x1="852.4" y1="247.7" x2="868.3" y2="273.2" stroke="#222" stroke-width="4.4"/><line x1="859.7" y1="243.0" x2="875.6" y2="268.5" stroke="#222" stroke-width="4.4"/><line x1="866.9" y1="238.3" x2="882.8" y2="263.7" stroke="#222" stroke-width="4.4"/><line x1="874.2" y1="233.6" x2="890.1" y2="259.0" stroke="#222" stroke-width="4.4"/><line x1="881.4" y1="228.8" x2="897.3" y2="254.3" stroke="#222" stroke-width="4.4"/><line x1="888.6" y1="224.1" x2="904.5" y2="249.5" stroke="#222" stroke-width="4.4"/><line x1="895.9" y1="219.4" x2="911.8" y2="244.8" stroke="#222" stroke-width="4.4"/><line x1="903.1" y1="214.6" x2="919.0" y2="240.1" stroke="#222" stroke-width="4.4"/>
<line x1="883.3" y1="359.8" x2="867.9" y2="335.2" stroke="#222" stroke-width="4.4"/><line x1="890.7" y1="355.3" x2="875.3" y2="330.7" stroke="#222" stroke-width="4.4"/><line x1="898.0" y1="350.7" x2="882.7" y2="326.1" stroke="#222" stroke-width="4.4"/><line x1="905.4" y1="346.2" x2="890.0" y2="321.6" stroke="#222" stroke-width="4.4"/><line x1="912.8" y1="341.7" x2="897.4" y2="317.1" stroke="#222" stroke-width="4.4"/><line x1="920.1" y1="337.1" x2="904.8" y2="312.6" stroke="#222" stroke-width="4.4"/><line x1="927.5" y1="332.6" x2="912.1" y2="308.0" stroke="#222" stroke-width="4.4"/><line x1="934.9" y1="328.1" x2="919.5" y2="303.5" stroke="#222" stroke-width="4.4"/><line x1="942.3" y1="323.6" x2="926.9" y2="299.0" stroke="#222" stroke-width="4.4"/><line x1="949.6" y1="319.0" x2="934.3" y2="294.4" stroke="#222" stroke-width="4.4"/><line x1="957.0" y1="314.5" x2="941.6" y2="289.9" stroke="#222" stroke-width="4.4"/><line x1="964.4" y1="310.0" x2="949.0" y2="285.4" stroke="#222" stroke-width="4.4"/>
<line x1="934.2" y1="228.5" x2="964.4" y2="215.3" stroke="#222" stroke-width="4.4"/><line x1="938.2" y1="236.2" x2="968.4" y2="222.9" stroke="#222" stroke-width="4.4"/><line x1="942.2" y1="243.9" x2="972.4" y2="230.6" stroke="#222" stroke-width="4.4"/><line x1="946.2" y1="251.5" x2="976.4" y2="238.3" stroke="#222" stroke-width="4.4"/><line x1="950.1" y1="259.2" x2="980.4" y2="246.0" stroke="#222" stroke-width="4.4"/><line x1="954.1" y1="266.9" x2="984.4" y2="253.7" stroke="#222" stroke-width="4.4"/><line x1="958.1" y1="274.6" x2="988.4" y2="261.3" stroke="#222" stroke-width="4.4"/>
<line x1="673.0" y1="722.8" x2="688.3" y2="748.3" stroke="#222" stroke-width="4.4"/><line x1="680.3" y1="718.2" x2="695.6" y2="743.6" stroke="#222" stroke-width="4.4"/><line x1="687.7" y1="713.6" x2="702.9" y2="739.0" stroke="#222" stroke-width="4.4"/><line x1="695.0" y1="709.0" x2="710.2" y2="734.4" stroke="#222" stroke-width="4.4"/><line x1="702.3" y1="704.3" x2="717.6" y2="729.8" stroke="#222" stroke-width="4.4"/><line x1="709.6" y1="699.7" x2="724.9" y2="725.2" stroke="#222" stroke-width="4.4"/><line x1="716.9" y1="695.1" x2="732.2" y2="720.6" stroke="#222" stroke-width="4.4"/>
<line x1="713.4" y1="788.9" x2="697.4" y2="762.3" stroke="#222" stroke-width="4.4"/><line x1="720.9" y1="784.6" x2="704.9" y2="758.0" stroke="#222" stroke-width="4.4"/><line x1="728.4" y1="780.4" x2="712.5" y2="753.8" stroke="#222" stroke-width="4.4"/><line x1="736.0" y1="776.1" x2="720.0" y2="749.6" stroke="#222" stroke-width="4.4"/><line x1="743.5" y1="771.9" x2="727.6" y2="745.3" stroke="#222" stroke-width="4.4"/><line x1="751.1" y1="767.7" x2="735.1" y2="741.1" stroke="#222" stroke-width="4.4"/><line x1="758.6" y1="763.4" x2="742.6" y2="736.8" stroke="#222" stroke-width="4.4"/>
<line x1="740.7" y1="723.3" x2="769.1" y2="707.3" stroke="#222" stroke-width="4.4"/><line x1="745.2" y1="730.7" x2="773.6" y2="714.7" stroke="#222" stroke-width="4.4"/><line x1="749.7" y1="738.0" x2="778.1" y2="722.0" stroke="#222" stroke-width="4.4"/><line x1="754.3" y1="745.4" x2="782.7" y2="729.4" stroke="#222" stroke-width="4.4"/>
<line x1="981.3" y1="527.8" x2="996.5" y2="553.7" stroke="#222" stroke-width="4.4"/><line x1="988.7" y1="523.3" x2="1003.9" y2="549.2" stroke="#222" stroke-width="4.4"/><line x1="996.1" y1="518.9" x2="1011.3" y2="544.7" stroke="#222" stroke-width="4.4"/><line x1="1003.5" y1="514.4" x2="1018.7" y2="540.3" stroke="#222" stroke-width="4.4"/><line x1="1010.9" y1="509.9" x2="1026.1" y2="535.8" stroke="#222" stroke-width="4.4"/><line x1="1018.4" y1="505.5" x2="1033.5" y2="531.4" stroke="#222" stroke-width="4.4"/><line x1="1025.8" y1="501.0" x2="1040.9" y2="526.9" stroke="#222" stroke-width="4.4"/><line x1="1033.2" y1="496.6" x2="1048.3" y2="522.4" stroke="#222" stroke-width="4.4"/><line x1="1040.6" y1="492.1" x2="1055.7" y2="518.0" stroke="#222" stroke-width="4.4"/><line x1="1048.0" y1="487.6" x2="1063.2" y2="513.5" stroke="#222" stroke-width="4.4"/><line x1="1055.4" y1="483.2" x2="1070.6" y2="509.1" stroke="#222" stroke-width="4.4"/><line x1="1062.8" y1="478.7" x2="1078.0" y2="504.6" stroke="#222" stroke-width="4.4"/>
<line x1="1024.1" y1="589.0" x2="1005.0" y2="562.2" stroke="#222" stroke-width="4.4"/><line x1="1031.2" y1="584.0" x2="1012.0" y2="557.1" stroke="#222" stroke-width="4.4"/><line x1="1038.2" y1="579.0" x2="1019.1" y2="552.1" stroke="#222" stroke-width="4.4"/><line x1="1045.3" y1="574.0" x2="1026.1" y2="547.1" stroke="#222" stroke-width="4.4"/><line x1="1052.3" y1="569.0" x2="1033.2" y2="542.1" stroke="#222" stroke-width="4.4"/><line x1="1059.4" y1="563.9" x2="1040.2" y2="537.1" stroke="#222" stroke-width="4.4"/><line x1="1066.4" y1="558.9" x2="1047.3" y2="532.0" stroke="#222" stroke-width="4.4"/><line x1="1073.4" y1="553.9" x2="1054.3" y2="527.0" stroke="#222" stroke-width="4.4"/><line x1="1080.5" y1="548.9" x2="1061.4" y2="522.0" stroke="#222" stroke-width="4.4"/><line x1="1087.5" y1="543.9" x2="1068.4" y2="517.0" stroke="#222" stroke-width="4.4"/><line x1="1094.6" y1="538.8" x2="1075.4" y2="512.0" stroke="#222" stroke-width="4.4"/><line x1="1101.6" y1="533.8" x2="1082.5" y2="506.9" stroke="#222" stroke-width="4.4"/>
<line x1="964.8" y1="582.0" x2="996.1" y2="564.3" stroke="#222" stroke-width="4.4"/><line x1="968.9" y1="589.6" x2="1000.3" y2="571.9" stroke="#222" stroke-width="4.4"/><line x1="973.1" y1="597.1" x2="1004.5" y2="579.5" stroke="#222" stroke-width="4.4"/><line x1="977.3" y1="604.7" x2="1008.7" y2="587.0" stroke="#222" stroke-width="4.4"/>
<line x1="1189.6" y1="823.1" x2="1170.7" y2="796.0" stroke="#222" stroke-width="4.4"/><line x1="1196.6" y1="818.0" x2="1177.7" y2="791.0" stroke="#222" stroke-width="4.4"/><line x1="1203.6" y1="813.0" x2="1184.7" y2="785.9" stroke="#222" stroke-width="4.4"/><line x1="1210.6" y1="807.9" x2="1191.7" y2="780.8" stroke="#222" stroke-width="4.4"/><line x1="1217.6" y1="802.8" x2="1198.7" y2="775.8" stroke="#222" stroke-width="4.4"/><line x1="1224.6" y1="797.7" x2="1205.7" y2="770.7" stroke="#222" stroke-width="4.4"/><line x1="1231.6" y1="792.7" x2="1212.7" y2="765.6" stroke="#222" stroke-width="4.4"/><line x1="1238.6" y1="787.6" x2="1219.7" y2="760.5" stroke="#222" stroke-width="4.4"/><line x1="1245.7" y1="782.5" x2="1226.8" y2="755.5" stroke="#222" stroke-width="4.4"/><line x1="1252.7" y1="777.5" x2="1233.8" y2="750.4" stroke="#222" stroke-width="4.4"/><line x1="1259.7" y1="772.4" x2="1240.8" y2="745.3" stroke="#222" stroke-width="4.4"/><line x1="1266.7" y1="767.3" x2="1247.8" y2="740.3" stroke="#222" stroke-width="4.4"/><line x1="1273.7" y1="762.2" x2="1254.8" y2="735.2" stroke="#222" stroke-width="4.4"/>
<line x1="354.5" y1="298.4" x2="467.6" y2="226.2" stroke="#fff" stroke-width="3"/><line x1="367.6" y1="320.2" x2="481.9" y2="249.5" stroke="#fff" stroke-width="3"/>
<line x1="545.3" y1="498.8" x2="567.4" y2="532.9" stroke="#fff" stroke-width="3"/><line x1="568.6" y1="484.1" x2="591.3" y2="518.5" stroke="#fff" stroke-width="3"/>
<line x1="680.4" y1="715.8" x2="724.6" y2="783.7" stroke="#fff" stroke-width="3"/>
<line x1="723.8" y1="732.2" x2="748.0" y2="770.5" stroke="#fff" stroke-width="3"/>
<line x1="851.2" y1="246.7" x2="913.0" y2="343.3" stroke="#fff" stroke-width="3"/><line x1="873.8" y1="232.0" x2="936.3" y2="329.0" stroke="#fff" stroke-width="3"/><line x1="896.2" y1="217.3" x2="959.6" y2="314.7" stroke="#fff" stroke-width="3"/>
<line x1="848.8" y1="293.2" x2="889.7" y2="357.6" stroke="#fff" stroke-width="3"/>
<line x1="986.4" y1="523.0" x2="1030.3" y2="586.5" stroke="#fff" stroke-width="3"/><line x1="1009.7" y1="509.0" x2="1052.6" y2="570.6" stroke="#fff" stroke-width="3"/><line x1="1033.0" y1="494.9" x2="1074.9" y2="554.7" stroke="#fff" stroke-width="3"/><line x1="1056.2" y1="480.9" x2="1097.2" y2="538.8" stroke="#fff" stroke-width="3"/>
<line x1="1148.2" y1="751.0" x2="1199.1" y2="818.1" stroke="#fff" stroke-width="3"/><line x1="1170.2" y1="735.1" x2="1221.4" y2="802.0" stroke="#fff" stroke-width="3"/><line x1="1192.2" y1="719.2" x2="1243.6" y2="785.9" stroke="#fff" stroke-width="3"/>
<line x1="1214.2" y1="703.4" x2="1237.5" y2="733.2" stroke="#fff" stroke-width="3"/>
<g clip-path="url(#cj2)"><line x1="719.0" y1="100.1" x2="753.0" y2="149.5" stroke="#fff" stroke-width="3"/><line x1="742.0" y1="85.4" x2="776.0" y2="134.8" stroke="#fff" stroke-width="3"/><line x1="764.2" y1="71.2" x2="798.2" y2="120.6" stroke="#fff" stroke-width="3"/></g>
<path d="M369.5 318.8Q380 312 389.8 311.6H405.5Q412 312 416 318L439.6 338.5" fill="none" stroke="#3c3c3c" stroke-width="2.6" />
<path d="M482.2 252.6Q466 262 458 278Q453 290 458 302L465.8 322.7" fill="none" stroke="#3c3c3c" stroke-width="2.6" />
<path d="M682 129.3L700 122.7Q716 119 726 125Q735 131 742 144L749 153.5" fill="none" stroke="#3c3c3c" stroke-width="2.4" />
<path d="M857 237Q868 262 878 269Q890 273 905 268Q925 258 968 236" fill="none" stroke="#3c3c3c" stroke-width="2.6" />
<path d="M900 215Q915 232 925 236Q935 238 968 226" fill="none" stroke="#3c3c3c" stroke-width="2.6" />
<path d="M968 250Q940 268 915 270Q895 272 880 268" fill="none" stroke="#3c3c3c" stroke-width="2.6" />
<path d="M905 268Q898 290 899 310L903 340" fill="none" stroke="#3c3c3c" stroke-width="2.6" />
<path d="M975 262Q955 272 952 285L958 320" fill="none" stroke="#3c3c3c" stroke-width="2.6" />
<path d="M720 719Q730 727 745 726L776 715" fill="none" stroke="#3c3c3c" stroke-width="2.6" />
<path d="M776 718Q745 735 735 750L720 778" fill="none" stroke="#3c3c3c" stroke-width="2.6" />
<path d="M992 535Q998 555 992 565L975 590" fill="none" stroke="#3c3c3c" stroke-width="2.6" />
<path d="M975 596L1010 565Q1035 552 1070 555" fill="none" stroke="#3c3c3c" stroke-width="2.6" />
<path d="M1279.7 692.7L1238 708Q1228 710 1218 706" fill="none" stroke="#3c3c3c" stroke-width="2.6" />
<path d="M1281 694.5Q1235 720 1220 745L1205 772" fill="none" stroke="#3c3c3c" stroke-width="2.6" />
<path d="M1176 736L1188 745L1198 745Q1230 750 1292 719" fill="none" stroke="#3c3c3c" stroke-width="2.6" />
<path d="M1292.4 718L1272.5 729L1259.7 744.4L1257 755.3" fill="none" stroke="#fff" stroke-width="3" />
<g shape-rendering="crispEdges">
<g transform="translate(645.0 561.0) rotate(-32.0) scale(1.0)" stroke="#242424" fill="none" stroke-linecap="round" stroke-linejoin="round"><path d="M8.6 .3L6.6 1.4L0 0" stroke-width="2.2"/><path d="M0 0L-8 -2.5M0 .5L-7.2 3.9" stroke-width="1.9"/><path d="M.6 -.4Q1.4 -3.3 3.2 -2.9Q4.9 -2.3 4.7 .5" stroke-width="1.3"/><path d="M2.4 1.6L.8 5.3" stroke-width="1.3"/><g fill="#242424" stroke="none"><circle cx="-1.6" cy="-7.1" r=".75"/><circle cx="5.6" cy="-7.6" r=".6"/><circle cx="9.3" cy="7" r=".7"/><circle cx="-7" cy="7" r=".55"/><circle cx="-8.5" cy="-6" r=".5"/><circle cx="3" cy="8.5" r=".5"/></g></g>
<g transform="translate(718.0 674.0) rotate(-32.0) scale(1.0)" stroke="#242424" fill="none" stroke-linecap="round" stroke-linejoin="round"><path d="M8.6 .3L6.6 1.4L0 0" stroke-width="2.2"/><path d="M0 0L-8 -2.5M0 .5L-7.2 3.9" stroke-width="1.9"/><path d="M.6 -.4Q1.4 -3.3 3.2 -2.9Q4.9 -2.3 4.7 .5" stroke-width="1.3"/><path d="M2.4 1.6L.8 5.3" stroke-width="1.3"/><g fill="#242424" stroke="none"><circle cx="-1.6" cy="-7.1" r=".75"/><circle cx="5.6" cy="-7.6" r=".6"/><circle cx="9.3" cy="7" r=".7"/><circle cx="-7" cy="7" r=".55"/><circle cx="-8.5" cy="-6" r=".5"/><circle cx="3" cy="8.5" r=".5"/></g></g>
<g transform="translate(827.0 642.0) rotate(-123.0) scale(0.8)" stroke="#242424" fill="none" stroke-linecap="round" stroke-linejoin="round"><path d="M8.6 .3L6.6 1.4L0 0" stroke-width="2.2"/><path d="M0 0L-8 -2.5M0 .5L-7.2 3.9" stroke-width="1.9"/><path d="M.6 -.4Q1.4 -3.3 3.2 -2.9Q4.9 -2.3 4.7 .5" stroke-width="1.3"/><path d="M2.4 1.6L.8 5.3" stroke-width="1.3"/><g fill="#242424" stroke="none"><circle cx="-1.6" cy="-7.1" r=".75"/><circle cx="5.6" cy="-7.6" r=".6"/><circle cx="9.3" cy="7" r=".7"/><circle cx="-7" cy="7" r=".55"/><circle cx="-8.5" cy="-6" r=".5"/><circle cx="3" cy="8.5" r=".5"/></g></g>
<polyline points="613.2,506.0 676.0,603.7 708.6,656.2 728.5,687.5" fill="none" stroke="#0000ff" stroke-width="11.6" />
<polyline points="761.5,695.3 800.0,671.3 925.0,590.5" fill="none" stroke="#0000ff" stroke-width="12.2" />
<polygon points="725.8,688.8 732.4,683.8 741.2,686.8 749.9,687.7 758.7,690.3 766.1,699.1 762.2,700.8 758.7,701.7 727.2,693.8" fill="#0000ff" />
</g>
<g transform="translate(577.9 450.8) rotate(-120.0)"><path d="M-19.0 -8.0H15.0Q22.0 -8.0 22.0 0Q22.0 8.0 15.0 8.0H-19.0Q-22.0 8.0 -22.0 5.0V-5.0Q-22.0 -8.0 -19.0 -8.0Z" fill="#ffff00"/><path d="M9.0 -6.8H16.0Q21.2 -6.8 21.2 0Q21.2 6.8 16.0 6.8H9.0Z" fill="#ffff8c"/><path d="M8.0 -6.0L0.0 -3.8V3.8L8.0 6.0Q9.6 0 8.0 -6.0Z" fill="#000"/><path d="M-16.0 -5.4L-8.0 -3.5999999999999996V3.5999999999999996L-16.0 5.4Q-17.2 0 -16.0 -5.4Z" fill="#000"/><path d="M-10.0 -7.1H2.0M-10.0 7.1H2.0" stroke="#6a6a00" stroke-width="1" stroke-dasharray="2 1.5" fill="none"/></g>
<g transform="translate(939.0 585.0) rotate(148.0)"><path d="M-19.0 -8.0H15.0Q22.0 -8.0 22.0 0Q22.0 8.0 15.0 8.0H-19.0Q-22.0 8.0 -22.0 5.0V-5.0Q-22.0 -8.0 -19.0 -8.0Z" fill="#ffff00"/><path d="M9.0 -6.8H16.0Q21.2 -6.8 21.2 0Q21.2 6.8 16.0 6.8H9.0Z" fill="#ffff8c"/><path d="M8.0 -6.0L0.0 -3.8V3.8L8.0 6.0Q9.6 0 8.0 -6.0Z" fill="#000"/><path d="M-16.0 -5.4L-8.0 -3.5999999999999996V3.5999999999999996L-16.0 5.4Q-17.2 0 -16.0 -5.4Z" fill="#000"/><path d="M-10.0 -7.1H2.0M-10.0 7.1H2.0" stroke="#6a6a00" stroke-width="1" stroke-dasharray="2 1.5" fill="none"/></g>
<polyline points="1384.0,110.0 1728.0,852.0" fill="none" stroke="#c4c4c4" stroke-width="12.5"/><polyline points="1384.0,110.0 1728.0,852.0" fill="none" stroke="#000" stroke-width="23.5" stroke-dasharray="2.7 2.5"/><polyline points="1378.3,112.6 1722.3,854.6" fill="none" stroke="#000" stroke-width="1.2" /><polyline points="1389.7,107.4 1733.7,849.4" fill="none" stroke="#000" stroke-width="1.2" />
<polyline points="1570.5,110.0 1617.5,230.0 1664.0,335.0 1772.0,562.0 1852.0,729.0 1878.7,795.6 1902.2,852.0" fill="none" stroke="#c4c4c4" stroke-width="12.5"/><polyline points="1570.5,110.0 1617.5,230.0 1664.0,335.0 1772.0,562.0 1852.0,729.0 1878.7,795.6 1902.2,852.0" fill="none" stroke="#000" stroke-width="23.5" stroke-dasharray="2.7 2.5"/><polyline points="1564.6,112.3 1611.7,232.4 1658.3,337.7 1766.3,564.7 1846.3,731.6 1872.9,798.0 1896.4,854.4" fill="none" stroke="#000" stroke-width="1.2" /><polyline points="1576.4,107.7 1623.3,227.6 1669.7,332.3 1777.7,559.3 1857.7,726.4 1884.5,793.2 1908.0,849.6" fill="none" stroke="#000" stroke-width="1.2" />
<polyline points="1606.0,110.0 1666.8,257.4 1700.0,335.0 1803.0,562.0 1858.5,680.0 1900.4,771.0 1915.0,803.0" fill="none" stroke="#c4c4c4" stroke-width="12.5"/><polyline points="1606.0,110.0 1666.8,257.4 1700.0,335.0 1803.0,562.0 1858.5,680.0 1900.4,771.0 1915.0,803.0" fill="none" stroke="#000" stroke-width="23.5" stroke-dasharray="2.7 2.5"/><polyline points="1600.2,112.4 1661.0,259.8 1694.2,337.6 1797.3,564.6 1852.8,682.7 1894.7,773.6 1909.3,805.6" fill="none" stroke="#000" stroke-width="1.2" /><polyline points="1611.8,107.6 1672.6,255.0 1705.8,332.4 1808.7,559.4 1864.2,677.3 1906.1,768.4 1920.7,800.4" fill="none" stroke="#000" stroke-width="1.2" />
<polyline points="1726.3,110.0 1767.6,196.7 1800.8,289.5 1811.5,333.0 1853.5,482.4 1871.5,563.0 1892.5,628.7 1906.2,697.5 1914.0,745.0" fill="none" stroke="#c4c4c4" stroke-width="12.5"/><polyline points="1726.3,110.0 1767.6,196.7 1800.8,289.5 1811.5,333.0 1853.5,482.4 1871.5,563.0 1892.5,628.7 1906.2,697.5 1914.0,745.0" fill="none" stroke="#000" stroke-width="23.5" stroke-dasharray="2.7 2.5"/><polyline points="1720.6,112.7 1761.8,199.1 1794.8,291.4 1805.4,334.7 1847.4,484.0 1865.4,564.6 1886.4,630.3 1900.0,698.6 1907.8,746.0" fill="none" stroke="#000" stroke-width="1.2" /><polyline points="1732.0,107.3 1773.4,194.3 1806.8,287.6 1817.6,331.3 1859.6,480.8 1877.6,561.4 1898.6,627.1 1912.4,696.4 1920.2,744.0" fill="none" stroke="#000" stroke-width="1.2" />
<polyline points="1760.7,110.0 1807.7,215.0 1846.6,335.0 1854.7,351.8 1906.0,562.0 1914.0,606.0" fill="none" stroke="#c4c4c4" stroke-width="12.5"/><polyline points="1760.7,110.0 1807.7,215.0 1846.6,335.0 1854.7,351.8 1906.0,562.0 1914.0,606.0" fill="none" stroke="#000" stroke-width="23.5" stroke-dasharray="2.7 2.5"/><polyline points="1754.9,112.6 1801.8,217.2 1840.6,337.0 1848.6,353.4 1899.9,563.4 1907.8,607.1" fill="none" stroke="#000" stroke-width="1.2" /><polyline points="1766.5,107.4 1813.6,212.8 1852.6,333.0 1860.8,350.2 1912.1,560.6 1920.2,604.9" fill="none" stroke="#000" stroke-width="1.2" />
<circle cx="1617.5" cy="230" r="13.5" fill="#990000"/>
<circle cx="1852" cy="729" r="13.5" fill="#990000"/>
<circle cx="1666.8" cy="257.4" r="13.5" fill="#990000"/>
<circle cx="1767.6" cy="196.7" r="13.5" fill="#990000"/>
<circle cx="1800.8" cy="289.5" r="13.5" fill="#990000"/>
<circle cx="1853.5" cy="482.4" r="13.5" fill="#990000"/>
<circle cx="1807.7" cy="215" r="13.5" fill="#990000"/>
<circle cx="1854.7" cy="351.8" r="13.5" fill="#990000"/>
<circle cx="1898.2" cy="157.7" r="13.5" fill="#990000"/>
<polygon points="1890.6,790.0 1901.0,785.5 1911.0,808.0 1911.0,852.0 1909.0,852.0" fill="#660000" shape-rendering="crispEdges"/>
<polygon points="1905.0,783.5 1911.0,781.0 1911.0,796.0" fill="#660000" shape-rendering="crispEdges"/>
<circle cx="1273.75" cy="92" r="35" fill="#cc0000"/>
<circle cx="1505.5" cy="587" r="34.5" fill="#cc0000"/>
<g transform="translate(337.6 310.1) rotate(-30.5)"><path d="M-12.5 0H5.7" stroke="#fff" stroke-width="1.1" stroke-dasharray="2.6 1.4" fill="none"/><path d="M12.5 0L5.7 -2.6V2.6Z" fill="#fff"/></g>
<g transform="translate(350.8 332.0) rotate(-30.5)"><path d="M-12.5 0H5.7" stroke="#fff" stroke-width="1.1" stroke-dasharray="2.6 1.4" fill="none"/><path d="M12.5 0L5.7 -2.6V2.6Z" fill="#fff"/><path d="M1.8 0V4.5" stroke="#fff" stroke-width="1" fill="none"/><path d="M2.1 12.4L-.7 4.2H4.7Z" fill="#fff"/></g>
<g transform="translate(660.1 126.2) rotate(-30.5)"><path d="M-8.0 0H8.0" stroke="#fff" stroke-width="1.1" stroke-dasharray="2.6 1.4" fill="none"/><path d="M8.0 0V-3" stroke="#fff" stroke-width="1" fill="none"/><path d="M8.3 -10.5L5.5 -3H11.0Z" fill="#fff"/></g>
<g transform="translate(669.5 144.3) rotate(-30.5)"><path d="M-8.0 0H8.0" stroke="#fff" stroke-width="1.1" stroke-dasharray="2.6 1.4" fill="none"/><path d="M8.0 0V3" stroke="#fff" stroke-width="1" fill="none"/><path d="M8.3 10.5L5.5 3H11.0Z" fill="#fff"/></g>
<g transform="translate(474.7 337.6) rotate(-122.5)"><path d="M-8.0 0H8.0" stroke="#fff" stroke-width="1.1" stroke-dasharray="2.6 1.4" fill="none"/><path d="M8.0 0V3" stroke="#fff" stroke-width="1" fill="none"/><path d="M8.3 10.5L5.5 3H11.0Z" fill="#fff"/></g>
<g transform="translate(532.1 480.2) rotate(57.5)"><path d="M-12.5 0H5.7" stroke="#fff" stroke-width="1.1" stroke-dasharray="2.6 1.4" fill="none"/><path d="M12.5 0L5.7 -2.6V2.6Z" fill="#fff"/></g>
<g transform="translate(602.6 537.2) rotate(-122.5)"><path d="M-12.5 0H5.7" stroke="#fff" stroke-width="1.1" stroke-dasharray="2.6 1.4" fill="none"/><path d="M12.5 0L5.7 -2.6V2.6Z" fill="#fff"/></g>
<g transform="translate(669.4 698.5) rotate(57.5)"><path d="M-12.5 0H5.7" stroke="#fff" stroke-width="1.1" stroke-dasharray="2.6 1.4" fill="none"/><path d="M12.5 0L5.7 -2.6V2.6Z" fill="#fff"/></g>
<g transform="translate(759.0 787.8) rotate(-122.5)"><path d="M-12.5 0H5.7" stroke="#fff" stroke-width="1.1" stroke-dasharray="2.6 1.4" fill="none"/><path d="M12.5 0L5.7 -2.6V2.6Z" fill="#fff"/></g>
<g transform="translate(811.8 136.2) rotate(-122.5)"><path d="M-12.5 0H5.7" stroke="#fff" stroke-width="1.1" stroke-dasharray="2.6 1.4" fill="none"/><path d="M12.5 0L5.7 -2.6V2.6Z" fill="#fff"/></g>
<g transform="translate(831.9 117.4) rotate(-122.5)"><path d="M-12.5 0H5.7" stroke="#fff" stroke-width="1.1" stroke-dasharray="2.6 1.4" fill="none"/><path d="M12.5 0L5.7 -2.6V2.6Z" fill="#fff"/></g>
<g transform="translate(817.7 244.1) rotate(57.5)"><path d="M-12.5 0H5.7" stroke="#fff" stroke-width="1.1" stroke-dasharray="2.6 1.4" fill="none"/><path d="M12.5 0L5.7 -2.6V2.6Z" fill="#fff"/></g>
<g transform="translate(840.2 229.4) rotate(57.5)"><path d="M-12.5 0H5.7" stroke="#fff" stroke-width="1.1" stroke-dasharray="2.6 1.4" fill="none"/><path d="M12.5 0L5.7 -2.6V2.6Z" fill="#fff"/><path d="M1.8 0V-4.5" stroke="#fff" stroke-width="1" fill="none"/><path d="M2.1 -12.4L-.7 -4.2H4.7Z" fill="#fff"/></g>
<g transform="translate(947.3 346.3) rotate(-122.5)"><path d="M-12.5 0H5.7" stroke="#fff" stroke-width="1.1" stroke-dasharray="2.6 1.4" fill="none"/><path d="M12.5 0L5.7 -2.6V2.6Z" fill="#fff"/></g>
<g transform="translate(970.6 332.0) rotate(-122.5)"><path d="M-12.5 0H5.7" stroke="#fff" stroke-width="1.1" stroke-dasharray="2.6 1.4" fill="none"/><path d="M12.5 0L5.7 -2.6V2.6Z" fill="#fff"/><path d="M1.8 0V4.5" stroke="#fff" stroke-width="1" fill="none"/><path d="M2.1 12.4L-.7 4.2H4.7Z" fill="#fff"/></g>
<g transform="translate(975.9 505.3) rotate(59.5)"><path d="M-12.5 0H5.7" stroke="#fff" stroke-width="1.1" stroke-dasharray="2.6 1.4" fill="none"/><path d="M12.5 0L5.7 -2.6V2.6Z" fill="#fff"/><path d="M1.8 0V4.5" stroke="#fff" stroke-width="1" fill="none"/><path d="M2.1 12.4L-.7 4.2H4.7Z" fill="#fff"/></g>
<g transform="translate(999.2 491.3) rotate(59.5)"><path d="M-12.5 0H5.7" stroke="#fff" stroke-width="1.1" stroke-dasharray="2.6 1.4" fill="none"/><path d="M12.5 0L5.7 -2.6V2.6Z" fill="#fff"/></g>
<g transform="translate(1086.8 571.4) rotate(-125.5)"><path d="M-12.5 0H5.7" stroke="#fff" stroke-width="1.1" stroke-dasharray="2.6 1.4" fill="none"/><path d="M12.5 0L5.7 -2.6V2.6Z" fill="#fff"/><path d="M1.8 0V-4.5" stroke="#fff" stroke-width="1" fill="none"/><path d="M2.1 -12.4L-.7 -4.2H4.7Z" fill="#fff"/></g>
<g transform="translate(1109.1 555.5) rotate(-125.5)"><path d="M-12.5 0H5.7" stroke="#fff" stroke-width="1.1" stroke-dasharray="2.6 1.4" fill="none"/><path d="M12.5 0L5.7 -2.6V2.6Z" fill="#fff"/></g>
<g transform="translate(1136.2 734.4) rotate(54.3)"><path d="M-12.5 0H5.7" stroke="#fff" stroke-width="1.1" stroke-dasharray="2.6 1.4" fill="none"/><path d="M12.5 0L5.7 -2.6V2.6Z" fill="#fff"/></g>
<g transform="translate(1158.2 718.5) rotate(54.3)"><path d="M-12.5 0H5.7" stroke="#fff" stroke-width="1.1" stroke-dasharray="2.6 1.4" fill="none"/><path d="M12.5 0L5.7 -2.6V2.6Z" fill="#fff"/><path d="M1.8 0V-4.5" stroke="#fff" stroke-width="1" fill="none"/><path d="M2.1 -12.4L-.7 -4.2H4.7Z" fill="#fff"/></g>
<g transform="translate(1255.5 802.5) rotate(-125.5)"><path d="M-12.5 0H5.7" stroke="#fff" stroke-width="1.1" stroke-dasharray="2.6 1.4" fill="none"/><path d="M12.5 0L5.7 -2.6V2.6Z" fill="#fff"/></g>
<g transform="translate(1277.8 786.4) rotate(-125.5)"><path d="M-12.5 0H5.7" stroke="#fff" stroke-width="1.1" stroke-dasharray="2.6 1.4" fill="none"/><path d="M12.5 0L5.7 -2.6V2.6Z" fill="#fff"/><path d="M1.8 0V4.5" stroke="#fff" stroke-width="1" fill="none"/><path d="M2.1 12.4L-.7 4.2H4.7Z" fill="#fff"/></g>
<g transform="translate(792.8 704.7) rotate(147.0)"><path d="M-13 0H-5" stroke="#fff" stroke-width="1" stroke-dasharray="2.6 1.4" fill="none"/><path d="M-5 -4V4" stroke="#fff" stroke-width="1" fill="none"/><path d="M-4.8 -10.4L-7.3 -3.4H-2.3ZM-4.8 10.4L-7.3 3.4H-2.3Z" fill="#fff"/></g>
<g transform="translate(986.5 217.6) rotate(154.0)"><path d="M-13 0H-5" stroke="#fff" stroke-width="1" stroke-dasharray="2.6 1.4" fill="none"/><path d="M-5 -4V4" stroke="#fff" stroke-width="1" fill="none"/><path d="M-4.8 -10.4L-7.3 -3.4H-2.3ZM-4.8 10.4L-7.3 3.4H-2.3Z" fill="#fff"/></g>
<g transform="translate(1293.0 684.5) rotate(152.0)"><path d="M-13 0H-5" stroke="#fff" stroke-width="1" stroke-dasharray="2.6 1.4" fill="none"/><path d="M-5 -4V4" stroke="#fff" stroke-width="1" fill="none"/><path d="M-4.8 -10.4L-7.3 -3.4H-2.3ZM-4.8 10.4L-7.3 3.4H-2.3Z" fill="#fff"/></g>
<g transform="translate(316.0 382.0) rotate(60.0) scale(1)" stroke="#242424" fill="none" stroke-linecap="round" stroke-linejoin="round"><path d="M8.6 .3L6.6 1.4L0 0" stroke-width="2.2"/><path d="M0 0L-8 -2.5M0 .5L-7.2 3.9" stroke-width="1.9"/><path d="M.6 -.4Q1.4 -3.3 3.2 -2.9Q4.9 -2.3 4.7 .5" stroke-width="1.3"/><path d="M2.4 1.6L.8 5.3" stroke-width="1.3"/><g fill="#242424" stroke="none"><circle cx="-1.6" cy="-7.1" r=".75"/><circle cx="5.6" cy="-7.6" r=".6"/><circle cx="9.3" cy="7" r=".7"/><circle cx="-7" cy="7" r=".55"/><circle cx="-8.5" cy="-6" r=".5"/><circle cx="3" cy="8.5" r=".5"/></g></g>
<g transform="translate(624.0 193.0) rotate(65.0) scale(1)" stroke="#242424" fill="none" stroke-linecap="round" stroke-linejoin="round"><path d="M8.6 .3L6.6 1.4L0 0" stroke-width="2.2"/><path d="M0 0L-8 -2.5M0 .5L-7.2 3.9" stroke-width="1.9"/><path d="M.6 -.4Q1.4 -3.3 3.2 -2.9Q4.9 -2.3 4.7 .5" stroke-width="1.3"/><path d="M2.4 1.6L.8 5.3" stroke-width="1.3"/><g fill="#242424" stroke="none"><circle cx="-1.6" cy="-7.1" r=".75"/><circle cx="5.6" cy="-7.6" r=".6"/><circle cx="9.3" cy="7" r=".7"/><circle cx="-7" cy="7" r=".55"/><circle cx="-8.5" cy="-6" r=".5"/><circle cx="3" cy="8.5" r=".5"/></g></g>
<g transform="translate(510.0 264.0) rotate(75.0) scale(1)" stroke="#242424" fill="none" stroke-linecap="round" stroke-linejoin="round"><path d="M8.6 .3L6.6 1.4L0 0" stroke-width="2.2"/><path d="M0 0L-8 -2.5M0 .5L-7.2 3.9" stroke-width="1.9"/><path d="M.6 -.4Q1.4 -3.3 3.2 -2.9Q4.9 -2.3 4.7 .5" stroke-width="1.3"/><path d="M2.4 1.6L.8 5.3" stroke-width="1.3"/><g fill="#242424" stroke="none"><circle cx="-1.6" cy="-7.1" r=".75"/><circle cx="5.6" cy="-7.6" r=".6"/><circle cx="9.3" cy="7" r=".7"/><circle cx="-7" cy="7" r=".55"/><circle cx="-8.5" cy="-6" r=".5"/><circle cx="3" cy="8.5" r=".5"/></g></g>
<g transform="translate(741.0 176.0) rotate(148.0) scale(1)" stroke="#242424" fill="none" stroke-linecap="round" stroke-linejoin="round"><path d="M8.6 .3L6.6 1.4L0 0" stroke-width="2.2"/><path d="M0 0L-8 -2.5M0 .5L-7.2 3.9" stroke-width="1.9"/><path d="M.6 -.4Q1.4 -3.3 3.2 -2.9Q4.9 -2.3 4.7 .5" stroke-width="1.3"/><path d="M2.4 1.6L.8 5.3" stroke-width="1.3"/><g fill="#242424" stroke="none"><circle cx="-1.6" cy="-7.1" r=".75"/><circle cx="5.6" cy="-7.6" r=".6"/><circle cx="9.3" cy="7" r=".7"/><circle cx="-7" cy="7" r=".55"/><circle cx="-8.5" cy="-6" r=".5"/><circle cx="3" cy="8.5" r=".5"/></g></g>
<g transform="translate(907.0 185.0) rotate(-32.0) scale(1)" stroke="#242424" fill="none" stroke-linecap="round" stroke-linejoin="round"><path d="M8.6 .3L6.6 1.4L0 0" stroke-width="2.2"/><path d="M0 0L-8 -2.5M0 .5L-7.2 3.9" stroke-width="1.9"/><path d="M.6 -.4Q1.4 -3.3 3.2 -2.9Q4.9 -2.3 4.7 .5" stroke-width="1.3"/><path d="M2.4 1.6L.8 5.3" stroke-width="1.3"/><g fill="#242424" stroke="none"><circle cx="-1.6" cy="-7.1" r=".75"/><circle cx="5.6" cy="-7.6" r=".6"/><circle cx="9.3" cy="7" r=".7"/><circle cx="-7" cy="7" r=".55"/><circle cx="-8.5" cy="-6" r=".5"/><circle cx="3" cy="8.5" r=".5"/></g></g>
<g transform="translate(510.0 346.0) rotate(-40.0) scale(1)" stroke="#242424" fill="none" stroke-linecap="round" stroke-linejoin="round"><path d="M8.6 .3L6.6 1.4L0 0" stroke-width="2.2"/><path d="M0 0L-8 -2.5M0 .5L-7.2 3.9" stroke-width="1.9"/><path d="M.6 -.4Q1.4 -3.3 3.2 -2.9Q4.9 -2.3 4.7 .5" stroke-width="1.3"/><path d="M2.4 1.6L.8 5.3" stroke-width="1.3"/><g fill="#242424" stroke="none"><circle cx="-1.6" cy="-7.1" r=".75"/><circle cx="5.6" cy="-7.6" r=".6"/><circle cx="9.3" cy="7" r=".7"/><circle cx="-7" cy="7" r=".55"/><circle cx="-8.5" cy="-6" r=".5"/><circle cx="3" cy="8.5" r=".5"/></g></g>
<g transform="translate(429.0 368.0) rotate(150.0) scale(1)" stroke="#242424" fill="none" stroke-linecap="round" stroke-linejoin="round"><path d="M8.6 .3L6.6 1.4L0 0" stroke-width="2.2"/><path d="M0 0L-8 -2.5M0 .5L-7.2 3.9" stroke-width="1.9"/><path d="M.6 -.4Q1.4 -3.3 3.2 -2.9Q4.9 -2.3 4.7 .5" stroke-width="1.3"/><path d="M2.4 1.6L.8 5.3" stroke-width="1.3"/><g fill="#242424" stroke="none"><circle cx="-1.6" cy="-7.1" r=".75"/><circle cx="5.6" cy="-7.6" r=".6"/><circle cx="9.3" cy="7" r=".7"/><circle cx="-7" cy="7" r=".55"/><circle cx="-8.5" cy="-6" r=".5"/><circle cx="3" cy="8.5" r=".5"/></g></g>
<g transform="translate(498.0 483.0) rotate(150.0) scale(1)" stroke="#242424" fill="none" stroke-linecap="round" stroke-linejoin="round"><path d="M8.6 .3L6.6 1.4L0 0" stroke-width="2.2"/><path d="M0 0L-8 -2.5M0 .5L-7.2 3.9" stroke-width="1.9"/><path d="M.6 -.4Q1.4 -3.3 3.2 -2.9Q4.9 -2.3 4.7 .5" stroke-width="1.3"/><path d="M2.4 1.6L.8 5.3" stroke-width="1.3"/><g fill="#242424" stroke="none"><circle cx="-1.6" cy="-7.1" r=".75"/><circle cx="5.6" cy="-7.6" r=".6"/><circle cx="9.3" cy="7" r=".7"/><circle cx="-7" cy="7" r=".55"/><circle cx="-8.5" cy="-6" r=".5"/><circle cx="3" cy="8.5" r=".5"/></g></g>
<g transform="translate(554.0 566.0) rotate(150.0) scale(1)" stroke="#242424" fill="none" stroke-linecap="round" stroke-linejoin="round"><path d="M8.6 .3L6.6 1.4L0 0" stroke-width="2.2"/><path d="M0 0L-8 -2.5M0 .5L-7.2 3.9" stroke-width="1.9"/><path d="M.6 -.4Q1.4 -3.3 3.2 -2.9Q4.9 -2.3 4.7 .5" stroke-width="1.3"/><path d="M2.4 1.6L.8 5.3" stroke-width="1.3"/><g fill="#242424" stroke="none"><circle cx="-1.6" cy="-7.1" r=".75"/><circle cx="5.6" cy="-7.6" r=".6"/><circle cx="9.3" cy="7" r=".7"/><circle cx="-7" cy="7" r=".55"/><circle cx="-8.5" cy="-6" r=".5"/><circle cx="3" cy="8.5" r=".5"/></g></g>
<g transform="translate(623.0 671.0) rotate(150.0) scale(1)" stroke="#242424" fill="none" stroke-linecap="round" stroke-linejoin="round"><path d="M8.6 .3L6.6 1.4L0 0" stroke-width="2.2"/><path d="M0 0L-8 -2.5M0 .5L-7.2 3.9" stroke-width="1.9"/><path d="M.6 -.4Q1.4 -3.3 3.2 -2.9Q4.9 -2.3 4.7 .5" stroke-width="1.3"/><path d="M2.4 1.6L.8 5.3" stroke-width="1.3"/><g fill="#242424" stroke="none"><circle cx="-1.6" cy="-7.1" r=".75"/><circle cx="5.6" cy="-7.6" r=".6"/><circle cx="9.3" cy="7" r=".7"/><circle cx="-7" cy="7" r=".55"/><circle cx="-8.5" cy="-6" r=".5"/><circle cx="3" cy="8.5" r=".5"/></g></g>
<g transform="translate(441.0 586.0) rotate(60.0) scale(0.75)" stroke="#242424" fill="none" stroke-linecap="round" stroke-linejoin="round"><path d="M8.6 .3L6.6 1.4L0 0" stroke-width="2.2"/><path d="M0 0L-8 -2.5M0 .5L-7.2 3.9" stroke-width="1.9"/><path d="M.6 -.4Q1.4 -3.3 3.2 -2.9Q4.9 -2.3 4.7 .5" stroke-width="1.3"/><path d="M2.4 1.6L.8 5.3" stroke-width="1.3"/><g fill="#242424" stroke="none"><circle cx="-1.6" cy="-7.1" r=".75"/><circle cx="5.6" cy="-7.6" r=".6"/><circle cx="9.3" cy="7" r=".7"/><circle cx="-7" cy="7" r=".55"/><circle cx="-8.5" cy="-6" r=".5"/><circle cx="3" cy="8.5" r=".5"/></g></g>
<g transform="translate(329.0 651.0) rotate(60.0) scale(0.75)" stroke="#242424" fill="none" stroke-linecap="round" stroke-linejoin="round"><path d="M8.6 .3L6.6 1.4L0 0" stroke-width="2.2"/><path d="M0 0L-8 -2.5M0 .5L-7.2 3.9" stroke-width="1.9"/><path d="M.6 -.4Q1.4 -3.3 3.2 -2.9Q4.9 -2.3 4.7 .5" stroke-width="1.3"/><path d="M2.4 1.6L.8 5.3" stroke-width="1.3"/><g fill="#242424" stroke="none"><circle cx="-1.6" cy="-7.1" r=".75"/><circle cx="5.6" cy="-7.6" r=".6"/><circle cx="9.3" cy="7" r=".7"/><circle cx="-7" cy="7" r=".55"/><circle cx="-8.5" cy="-6" r=".5"/><circle cx="3" cy="8.5" r=".5"/></g></g>
<g transform="translate(780.0 776.0) rotate(-32.0) scale(1)" stroke="#242424" fill="none" stroke-linecap="round" stroke-linejoin="round"><path d="M8.6 .3L6.6 1.4L0 0" stroke-width="2.2"/><path d="M0 0L-8 -2.5M0 .5L-7.2 3.9" stroke-width="1.9"/><path d="M.6 -.4Q1.4 -3.3 3.2 -2.9Q4.9 -2.3 4.7 .5" stroke-width="1.3"/><path d="M2.4 1.6L.8 5.3" stroke-width="1.3"/><g fill="#242424" stroke="none"><circle cx="-1.6" cy="-7.1" r=".75"/><circle cx="5.6" cy="-7.6" r=".6"/><circle cx="9.3" cy="7" r=".7"/><circle cx="-7" cy="7" r=".55"/><circle cx="-8.5" cy="-6" r=".5"/><circle cx="3" cy="8.5" r=".5"/></g></g>
<g transform="translate(708.8 810.0) rotate(150.0) scale(1)" stroke="#242424" fill="none" stroke-linecap="round" stroke-linejoin="round"><path d="M8.6 .3L6.6 1.4L0 0" stroke-width="2.2"/><path d="M0 0L-8 -2.5M0 .5L-7.2 3.9" stroke-width="1.9"/><path d="M.6 -.4Q1.4 -3.3 3.2 -2.9Q4.9 -2.3 4.7 .5" stroke-width="1.3"/><path d="M2.4 1.6L.8 5.3" stroke-width="1.3"/><g fill="#242424" stroke="none"><circle cx="-1.6" cy="-7.1" r=".75"/><circle cx="5.6" cy="-7.6" r=".6"/><circle cx="9.3" cy="7" r=".7"/><circle cx="-7" cy="7" r=".55"/><circle cx="-8.5" cy="-6" r=".5"/><circle cx="3" cy="8.5" r=".5"/></g></g>
<g transform="translate(872.0 380.0) rotate(150.0) scale(1)" stroke="#242424" fill="none" stroke-linecap="round" stroke-linejoin="round"><path d="M8.6 .3L6.6 1.4L0 0" stroke-width="2.2"/><path d="M0 0L-8 -2.5M0 .5L-7.2 3.9" stroke-width="1.9"/><path d="M.6 -.4Q1.4 -3.3 3.2 -2.9Q4.9 -2.3 4.7 .5" stroke-width="1.3"/><path d="M2.4 1.6L.8 5.3" stroke-width="1.3"/><g fill="#242424" stroke="none"><circle cx="-1.6" cy="-7.1" r=".75"/><circle cx="5.6" cy="-7.6" r=".6"/><circle cx="9.3" cy="7" r=".7"/><circle cx="-7" cy="7" r=".55"/><circle cx="-8.5" cy="-6" r=".5"/><circle cx="3" cy="8.5" r=".5"/></g></g>
<g transform="translate(940.0 495.0) rotate(150.0) scale(1)" stroke="#242424" fill="none" stroke-linecap="round" stroke-linejoin="round"><path d="M8.6 .3L6.6 1.4L0 0" stroke-width="2.2"/><path d="M0 0L-8 -2.5M0 .5L-7.2 3.9" stroke-width="1.9"/><path d="M.6 -.4Q1.4 -3.3 3.2 -2.9Q4.9 -2.3 4.7 .5" stroke-width="1.3"/><path d="M2.4 1.6L.8 5.3" stroke-width="1.3"/><g fill="#242424" stroke="none"><circle cx="-1.6" cy="-7.1" r=".75"/><circle cx="5.6" cy="-7.6" r=".6"/><circle cx="9.3" cy="7" r=".7"/><circle cx="-7" cy="7" r=".55"/><circle cx="-8.5" cy="-6" r=".5"/><circle cx="3" cy="8.5" r=".5"/></g></g>
<g transform="translate(1002.0 343.0) rotate(-32.0) scale(1)" stroke="#242424" fill="none" stroke-linecap="round" stroke-linejoin="round"><path d="M8.6 .3L6.6 1.4L0 0" stroke-width="2.2"/><path d="M0 0L-8 -2.5M0 .5L-7.2 3.9" stroke-width="1.9"/><path d="M.6 -.4Q1.4 -3.3 3.2 -2.9Q4.9 -2.3 4.7 .5" stroke-width="1.3"/><path d="M2.4 1.6L.8 5.3" stroke-width="1.3"/><g fill="#242424" stroke="none"><circle cx="-1.6" cy="-7.1" r=".75"/><circle cx="5.6" cy="-7.6" r=".6"/><circle cx="9.3" cy="7" r=".7"/><circle cx="-7" cy="7" r=".55"/><circle cx="-8.5" cy="-6" r=".5"/><circle cx="3" cy="8.5" r=".5"/></g></g>
<g transform="translate(1073.0 455.0) rotate(-32.0) scale(1)" stroke="#242424" fill="none" stroke-linecap="round" stroke-linejoin="round"><path d="M8.6 .3L6.6 1.4L0 0" stroke-width="2.2"/><path d="M0 0L-8 -2.5M0 .5L-7.2 3.9" stroke-width="1.9"/><path d="M.6 -.4Q1.4 -3.3 3.2 -2.9Q4.9 -2.3 4.7 .5" stroke-width="1.3"/><path d="M2.4 1.6L.8 5.3" stroke-width="1.3"/><g fill="#242424" stroke="none"><circle cx="-1.6" cy="-7.1" r=".75"/><circle cx="5.6" cy="-7.6" r=".6"/><circle cx="9.3" cy="7" r=".7"/><circle cx="-7" cy="7" r=".55"/><circle cx="-8.5" cy="-6" r=".5"/><circle cx="3" cy="8.5" r=".5"/></g></g>
<g transform="translate(1019.0 616.0) rotate(150.0) scale(1)" stroke="#242424" fill="none" stroke-linecap="round" stroke-linejoin="round"><path d="M8.6 .3L6.6 1.4L0 0" stroke-width="2.2"/><path d="M0 0L-8 -2.5M0 .5L-7.2 3.9" stroke-width="1.9"/><path d="M.6 -.4Q1.4 -3.3 3.2 -2.9Q4.9 -2.3 4.7 .5" stroke-width="1.3"/><path d="M2.4 1.6L.8 5.3" stroke-width="1.3"/><g fill="#242424" stroke="none"><circle cx="-1.6" cy="-7.1" r=".75"/><circle cx="5.6" cy="-7.6" r=".6"/><circle cx="9.3" cy="7" r=".7"/><circle cx="-7" cy="7" r=".55"/><circle cx="-8.5" cy="-6" r=".5"/><circle cx="3" cy="8.5" r=".5"/></g></g>
<g transform="translate(1092.5 722.5) rotate(150.0) scale(1)" stroke="#242424" fill="none" stroke-linecap="round" stroke-linejoin="round"><path d="M8.6 .3L6.6 1.4L0 0" stroke-width="2.2"/><path d="M0 0L-8 -2.5M0 .5L-7.2 3.9" stroke-width="1.9"/><path d="M.6 -.4Q1.4 -3.3 3.2 -2.9Q4.9 -2.3 4.7 .5" stroke-width="1.3"/><path d="M2.4 1.6L.8 5.3" stroke-width="1.3"/><g fill="#242424" stroke="none"><circle cx="-1.6" cy="-7.1" r=".75"/><circle cx="5.6" cy="-7.6" r=".6"/><circle cx="9.3" cy="7" r=".7"/><circle cx="-7" cy="7" r=".55"/><circle cx="-8.5" cy="-6" r=".5"/><circle cx="3" cy="8.5" r=".5"/></g></g>
<g transform="translate(1150.0 572.0) rotate(-32.0) scale(1)" stroke="#242424" fill="none" stroke-linecap="round" stroke-linejoin="round"><path d="M8.6 .3L6.6 1.4L0 0" stroke-width="2.2"/><path d="M0 0L-8 -2.5M0 .5L-7.2 3.9" stroke-width="1.9"/><path d="M.6 -.4Q1.4 -3.3 3.2 -2.9Q4.9 -2.3 4.7 .5" stroke-width="1.3"/><path d="M2.4 1.6L.8 5.3" stroke-width="1.3"/><g fill="#242424" stroke="none"><circle cx="-1.6" cy="-7.1" r=".75"/><circle cx="5.6" cy="-7.6" r=".6"/><circle cx="9.3" cy="7" r=".7"/><circle cx="-7" cy="7" r=".55"/><circle cx="-8.5" cy="-6" r=".5"/><circle cx="3" cy="8.5" r=".5"/></g></g>
<g transform="translate(1225.0 667.0) rotate(-32.0) scale(1)" stroke="#242424" fill="none" stroke-linecap="round" stroke-linejoin="round"><path d="M8.6 .3L6.6 1.4L0 0" stroke-width="2.2"/><path d="M0 0L-8 -2.5M0 .5L-7.2 3.9" stroke-width="1.9"/><path d="M.6 -.4Q1.4 -3.3 3.2 -2.9Q4.9 -2.3 4.7 .5" stroke-width="1.3"/><path d="M2.4 1.6L.8 5.3" stroke-width="1.3"/><g fill="#242424" stroke="none"><circle cx="-1.6" cy="-7.1" r=".75"/><circle cx="5.6" cy="-7.6" r=".6"/><circle cx="9.3" cy="7" r=".7"/><circle cx="-7" cy="7" r=".55"/><circle cx="-8.5" cy="-6" r=".5"/><circle cx="3" cy="8.5" r=".5"/></g></g>
<g transform="translate(1186.0 848.0) rotate(150.0) scale(1)" stroke="#242424" fill="none" stroke-linecap="round" stroke-linejoin="round"><path d="M8.6 .3L6.6 1.4L0 0" stroke-width="2.2"/><path d="M0 0L-8 -2.5M0 .5L-7.2 3.9" stroke-width="1.9"/><path d="M.6 -.4Q1.4 -3.3 3.2 -2.9Q4.9 -2.3 4.7 .5" stroke-width="1.3"/><path d="M2.4 1.6L.8 5.3" stroke-width="1.3"/><g fill="#242424" stroke="none"><circle cx="-1.6" cy="-7.1" r=".75"/><circle cx="5.6" cy="-7.6" r=".6"/><circle cx="9.3" cy="7" r=".7"/><circle cx="-7" cy="7" r=".55"/><circle cx="-8.5" cy="-6" r=".5"/><circle cx="3" cy="8.5" r=".5"/></g></g>
<g transform="translate(1008.8 178.8) rotate(-116.0) scale(0.8)" stroke="#242424" fill="none" stroke-linecap="round" stroke-linejoin="round"><path d="M8.6 .3L6.6 1.4L0 0" stroke-width="2.2"/><path d="M0 0L-8 -2.5M0 .5L-7.2 3.9" stroke-width="1.9"/><path d="M.6 -.4Q1.4 -3.3 3.2 -2.9Q4.9 -2.3 4.7 .5" stroke-width="1.3"/><path d="M2.4 1.6L.8 5.3" stroke-width="1.3"/><g fill="#242424" stroke="none"><circle cx="-1.6" cy="-7.1" r=".75"/><circle cx="5.6" cy="-7.6" r=".6"/><circle cx="9.3" cy="7" r=".7"/><circle cx="-7" cy="7" r=".55"/><circle cx="-8.5" cy="-6" r=".5"/><circle cx="3" cy="8.5" r=".5"/></g></g>
<g transform="translate(1126.0 126.0) rotate(-116.0) scale(0.8)" stroke="#242424" fill="none" stroke-linecap="round" stroke-linejoin="round"><path d="M8.6 .3L6.6 1.4L0 0" stroke-width="2.2"/><path d="M0 0L-8 -2.5M0 .5L-7.2 3.9" stroke-width="1.9"/><path d="M.6 -.4Q1.4 -3.3 3.2 -2.9Q4.9 -2.3 4.7 .5" stroke-width="1.3"/><path d="M2.4 1.6L.8 5.3" stroke-width="1.3"/><g fill="#242424" stroke="none"><circle cx="-1.6" cy="-7.1" r=".75"/><circle cx="5.6" cy="-7.6" r=".6"/><circle cx="9.3" cy="7" r=".7"/><circle cx="-7" cy="7" r=".55"/><circle cx="-8.5" cy="-6" r=".5"/><circle cx="3" cy="8.5" r=".5"/></g></g>
<g transform="translate(1010.0 261.0) rotate(64.0) scale(0.8)" stroke="#242424" fill="none" stroke-linecap="round" stroke-linejoin="round"><path d="M8.6 .3L6.6 1.4L0 0" stroke-width="2.2"/><path d="M0 0L-8 -2.5M0 .5L-7.2 3.9" stroke-width="1.9"/><path d="M.6 -.4Q1.4 -3.3 3.2 -2.9Q4.9 -2.3 4.7 .5" stroke-width="1.3"/><path d="M2.4 1.6L.8 5.3" stroke-width="1.3"/><g fill="#242424" stroke="none"><circle cx="-1.6" cy="-7.1" r=".75"/><circle cx="5.6" cy="-7.6" r=".6"/><circle cx="9.3" cy="7" r=".7"/><circle cx="-7" cy="7" r=".55"/><circle cx="-8.5" cy="-6" r=".5"/><circle cx="3" cy="8.5" r=".5"/></g></g>
<g transform="translate(1124.0 206.0) rotate(64.0) scale(0.8)" stroke="#242424" fill="none" stroke-linecap="round" stroke-linejoin="round"><path d="M8.6 .3L6.6 1.4L0 0" stroke-width="2.2"/><path d="M0 0L-8 -2.5M0 .5L-7.2 3.9" stroke-width="1.9"/><path d="M.6 -.4Q1.4 -3.3 3.2 -2.9Q4.9 -2.3 4.7 .5" stroke-width="1.3"/><path d="M2.4 1.6L.8 5.3" stroke-width="1.3"/><g fill="#242424" stroke="none"><circle cx="-1.6" cy="-7.1" r=".75"/><circle cx="5.6" cy="-7.6" r=".6"/><circle cx="9.3" cy="7" r=".7"/><circle cx="-7" cy="7" r=".55"/><circle cx="-8.5" cy="-6" r=".5"/><circle cx="3" cy="8.5" r=".5"/></g></g>
<g transform="translate(1241.0 146.0) rotate(64.0) scale(0.8)" stroke="#242424" fill="none" stroke-linecap="round" stroke-linejoin="round"><path d="M8.6 .3L6.6 1.4L0 0" stroke-width="2.2"/><path d="M0 0L-8 -2.5M0 .5L-7.2 3.9" stroke-width="1.9"/><path d="M.6 -.4Q1.4 -3.3 3.2 -2.9Q4.9 -2.3 4.7 .5" stroke-width="1.3"/><path d="M2.4 1.6L.8 5.3" stroke-width="1.3"/><g fill="#242424" stroke="none"><circle cx="-1.6" cy="-7.1" r=".75"/><circle cx="5.6" cy="-7.6" r=".6"/><circle cx="9.3" cy="7" r=".7"/><circle cx="-7" cy="7" r=".55"/><circle cx="-8.5" cy="-6" r=".5"/><circle cx="3" cy="8.5" r=".5"/></g></g>
<g transform="translate(1882.0 212.0) rotate(155.0) scale(0.8)" stroke="#242424" fill="none" stroke-linecap="round" stroke-linejoin="round"><path d="M8.6 .3L6.6 1.4L0 0" stroke-width="2.2"/><path d="M0 0L-8 -2.5M0 .5L-7.2 3.9" stroke-width="1.9"/><path d="M.6 -.4Q1.4 -3.3 3.2 -2.9Q4.9 -2.3 4.7 .5" stroke-width="1.3"/><path d="M2.4 1.6L.8 5.3" stroke-width="1.3"/><g fill="#242424" stroke="none"><circle cx="-1.6" cy="-7.1" r=".75"/><circle cx="5.6" cy="-7.6" r=".6"/><circle cx="9.3" cy="7" r=".7"/><circle cx="-7" cy="7" r=".55"/><circle cx="-8.5" cy="-6" r=".5"/><circle cx="3" cy="8.5" r=".5"/></g></g>
<path d="M302.5 833v9.5h87v-9.5" stroke="#000" stroke-width="1.2" fill="none" shape-rendering="crispEdges"/>
<text transform="translate(295.3 827) scale(.84 1)" font-family="Liberation Sans,sans-serif" font-size="18" fill="#000" stroke="#000" stroke-width=".45">0</text>
<text transform="translate(383 827) scale(.84 1)" font-family="Liberation Sans,sans-serif" font-size="18" fill="#000" stroke="#000" stroke-width=".45">10m</text>
</svg>
<div class="a" style="left:0;top:853px;width:1920px;height:5px;background:#f8f8f8"></div>
<div class="a" style="left:0;top:864px;width:1902px;height:115px;background:#fff"></div>
<span class="t " style="left:4.00px;top:864.00px;font-size:15px;line-height:17.25px;letter-spacing:-0.317px;color:#109810;">DijkstraRouter answered 12 queries and explored 89.33 edges on average.</span>
<span class="t " style="left:4.00px;top:882.72px;font-size:15px;line-height:17.25px;letter-spacing:-0.255px;color:#109810;">DijkstraRouter spent 2ms answering queries (0.17ms on average).</span>
<span class="t " style="left:4.00px;top:901.44px;font-size:15px;line-height:17.25px;letter-spacing:-0.301px;color:#109810;">DijkstraRouter answered 1 queries and explored 7.00 edges on average.</span>
<span class="t " style="left:4.00px;top:920.16px;font-size:15px;line-height:17.25px;letter-spacing:-0.255px;color:#109810;">DijkstraRouter spent 0ms answering queries (0.00ms on average).</span>
<span class="t " style="left:4.00px;top:938.88px;font-size:15px;line-height:17.25px;letter-spacing:-0.301px;color:#109810;">DijkstraRouter answered 1 queries and explored 7.00 edges on average.</span>
<span class="t " style="left:4.00px;top:957.60px;font-size:15px;line-height:17.25px;letter-spacing:-0.255px;color:#109810;">DijkstraRouter spent 0ms answering queries (0.00ms on average).</span>
<div class="a" style="left:1902px;top:864px;width:18px;height:114px;background:#f8f8f8"></div>
<div class="btn" style="left:1902px;top:864px;width:18px;height:18px"></div>
<svg class="a" style="left:1906px;top:870px" width="10" height="6"><path d="M0 5.5h10L5 0z" fill="#000"/></svg>
<div class="btn" style="left:1902px;top:950px;width:18px;height:8px"></div>
<div class="btn" style="left:1902px;top:958px;width:18px;height:18px"></div>
<svg class="a" style="left:1906px;top:965px" width="10" height="6"><path d="M0 0.5h10L5 6z" fill="#000"/></svg>
<div class="a" style="left:0;top:979px;width:1902px;height:18px;background:#f8f8f8"></div>
<div class="btn" style="left:0;top:979px;width:18px;height:18px"></div>
<svg class="a" style="left:5px;top:983px" width="7" height="10"><path d="M6.5 0v10L0.5 5z" fill="#000"/></svg>
<div class="btn" style="left:18px;top:979px;width:1392px;height:18px"></div>
<div class="btn" style="left:1883px;top:979px;width:18px;height:18px"></div>
<svg class="a" style="left:1889px;top:983px" width="7" height="10"><path d="M0.5 0v10L6.5 5z" fill="#000"/></svg>
<div class="a" style="left:1902px;top:977px;width:18px;height:20px;background:#f0f0f0"></div>
<div class="sunk" style="left:5px;top:1001px;width:1569px;height:25px"></div>
<div class="sunk" style="left:1580px;top:1001px;width:166px;height:25px;overflow:hidden"><span class="t " style="left:3.00px;top:3.20px;font-size:15px;line-height:17.25px;letter-spacing:-0.628px;">x:444346.69, y:4117581.45</span></div>
<div class="sunk" style="left:1750px;top:1001px;width:167px;height:25px;overflow:hidden"><span class="t " style="left:3.00px;top:3.20px;font-size:15px;line-height:17.25px;letter-spacing:-0.464px;">lat:37.203046, lon:-3.627100</span></div>
</body></html>
